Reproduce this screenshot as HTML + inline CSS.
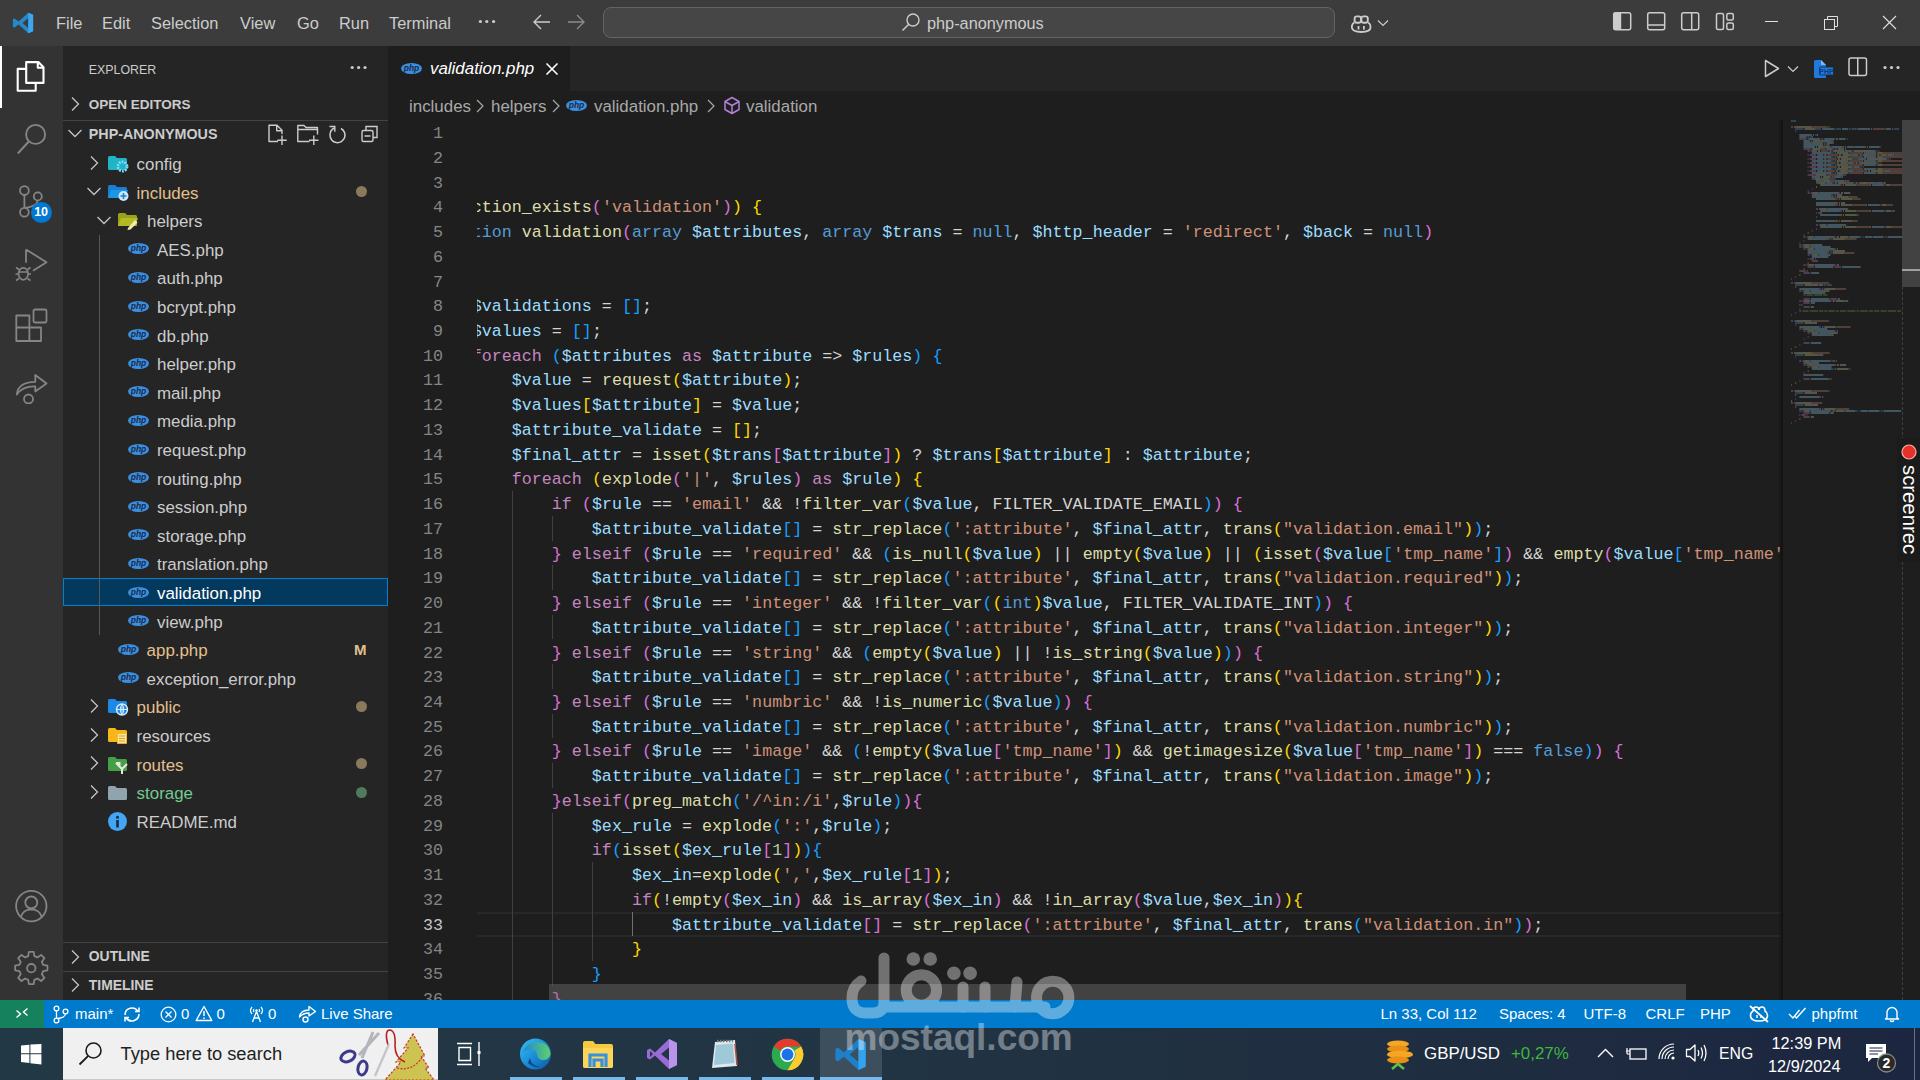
<!DOCTYPE html><html><head><meta charset="utf-8"><style>
*{margin:0;padding:0;box-sizing:border-box}
html,body{width:1920px;height:1080px;overflow:hidden;background:#1e1e1e;font-family:"Liberation Sans",sans-serif}
.abs{position:absolute}
#title{position:absolute;left:0;top:0;width:1920px;height:46px;background:#3c3c3c}
.menu{position:absolute;top:13px;font-size:16.4px;color:#cccccc;line-height:20px}
#act{position:absolute;left:0;top:46px;width:63px;height:954px;background:#333333}
#side{position:absolute;left:63px;top:46px;width:325px;height:954px;background:#252526}
#tabs{position:absolute;left:388px;top:46px;width:1532px;height:45px;background:#252526}
#editor{position:absolute;left:388px;top:91px;width:1532px;height:909px;background:#1e1e1e}
#status{position:absolute;left:0;top:1000px;width:1920px;height:28px;background:#007acc;color:#fff;font-size:15px}
#task{position:absolute;left:0;top:1028px;width:1920px;height:52px;background:linear-gradient(90deg,#233845 0%,#213444 45%,#1f2e40 72%,#1c2640 100%)}
.tree{position:absolute;font-size:16.9px;color:#cccccc;line-height:20px;white-space:pre}
.sec{position:absolute;font-size:13.9px;font-weight:bold;color:#cccccc;line-height:18px}
.ln{position:absolute;right:0;width:60px;text-align:right;color:#858585;height:24.735px;line-height:24.735px}
.ln.act{color:#c6c6c6}
#lnums{position:absolute;left:383px;top:122.1px;width:60px;height:880px;font-family:"Liberation Mono",monospace;font-size:16.69px}
#codeclip{position:absolute;left:476.7px;top:120.1px;width:1304px;height:880px;overflow:hidden}
.cl{position:absolute;left:-5px;margin-top:2px;white-space:pre;font-family:"Liberation Mono",monospace;font-size:16.69px;height:24.735px;line-height:24.735px;color:#d4d4d4}
.sb{position:absolute;top:5px;line-height:18px;white-space:pre}
.guide{position:absolute;width:1px;background:#404040}
</style></head><body><div id="title">
<svg class="abs" style="left:12px;top:12px" width="22" height="22" viewBox="0 0 100 100"><path d="M74 3 L96 13 V87 L74 97 L30 57 L12 71 L4 67 V33 L12 29 L30 43 Z M74 27 L48 50 L74 73Z" fill="#2489ca" fill-rule="evenodd"/><path d="M74 3 L96 13 V87 L74 97Z" fill="#3ea6ee"/></svg>
<div class="menu" style="left:56px">File</div>
<div class="menu" style="left:102px">Edit</div>
<div class="menu" style="left:151px">Selection</div>
<div class="menu" style="left:240px">View</div>
<div class="menu" style="left:297px">Go</div>
<div class="menu" style="left:339px">Run</div>
<div class="menu" style="left:389px">Terminal</div>
<svg class="abs" style="left:477px;top:18px" width="20" height="8"><circle cx="3.4" cy="3.5" r="1.6" fill="#cccccc"/><circle cx="9.8" cy="3.5" r="1.6" fill="#cccccc"/><circle cx="16.6" cy="3.5" r="1.6" fill="#cccccc"/></svg>
<svg class="abs" style="left:532px;top:13px" width="20" height="18" viewBox="0 0 20 18"><path d="M9 2 L2 9 L9 16 M2 9 H18" fill="none" stroke="#cccccc" stroke-width="1.4"/></svg>
<svg class="abs" style="left:566px;top:13px" width="20" height="18" viewBox="0 0 20 18"><path d="M11 2 L18 9 L11 16 M18 9 H2" fill="none" stroke="#8c8c8c" stroke-width="1.4"/></svg>
<div class="abs" style="left:603px;top:7px;width:732px;height:31px;background:#464646;border:1px solid #646464;border-radius:8px"></div>
<svg class="abs" style="left:900px;top:12px" width="22" height="20" viewBox="0 0 22 20"><circle cx="13" cy="8" r="6" fill="none" stroke="#cccccc" stroke-width="1.4"/><path d="M8.8 12.2 L2.5 18.5" stroke="#cccccc" stroke-width="1.5"/></svg>
<div class="menu" style="left:927px;font-size:16.3px">php-anonymous</div>
<svg class="abs" style="left:1351px;top:15px" width="21" height="18" viewBox="0 0 21 18"><path d="M3.2 7.5 Q0.8 9 0.8 12 Q0.8 17 10.2 17 Q19.6 17 19.6 12 Q19.6 9 17.2 7.5" fill="none" stroke="#cccccc" stroke-width="1.8"/><rect x="3.6" y="1.4" width="6.4" height="6.4" rx="2.2" fill="none" stroke="#cccccc" stroke-width="1.9"/><rect x="10.4" y="1.4" width="6.4" height="6.4" rx="2.2" fill="none" stroke="#cccccc" stroke-width="1.9"/><path d="M7.5 11 V14.5 M12.9 11 V14.5" stroke="#cccccc" stroke-width="1.8"/></svg>
<svg class="abs" style="left:1377px;top:19px" width="12" height="8" viewBox="0 0 12 8"><path d="M1 1.5 L6 6.5 L11 1.5" fill="none" stroke="#cccccc" stroke-width="1.2"/></svg>
<svg class="abs" style="left:1612px;top:11px" width="124" height="21" viewBox="0 0 124 21"><rect x="1.7" y="1.7" width="17" height="17" rx="2" fill="none" stroke="#cccccc" stroke-width="1.5"/><rect x="1.7" y="1.7" width="7.5" height="17" fill="#cccccc"/><rect x="35.7" y="1.7" width="17" height="17" rx="2" fill="none" stroke="#cccccc" stroke-width="1.5"/><path d="M35.7 14 H52.7" stroke="#cccccc" stroke-width="1.5"/><rect x="69.7" y="1.7" width="17" height="17" rx="2" fill="none" stroke="#cccccc" stroke-width="1.5"/><path d="M79.7 1.7 V18.7" stroke="#cccccc" stroke-width="1.5"/><rect x="104.5" y="2.5" width="7" height="16" rx="1.5" fill="none" stroke="#cccccc" stroke-width="1.5"/><rect x="114.8" y="2.5" width="6.5" height="6.5" rx="1.5" fill="none" stroke="#cccccc" stroke-width="1.5"/><rect x="114.8" y="12" width="6.5" height="6.5" rx="1.5" fill="none" stroke="#cccccc" stroke-width="1.5"/></svg>
<div class="abs" style="left:1765px;top:21px;width:13px;height:1px;background:#e0e0e0"></div>
<svg class="abs" style="left:1822px;top:14px" width="16" height="17" viewBox="0 0 16 17"><rect x="2.5" y="5.5" width="10" height="10" fill="none" stroke="#e0e0e0" stroke-width="1"/><path d="M5.5 5.5 V2.5 H15.5 V12.5 H12.5" fill="none" stroke="#e0e0e0" stroke-width="1"/></svg>
<svg class="abs" style="left:1882px;top:15px" width="15" height="15" viewBox="0 0 15 15"><path d="M1 1 L14 14 M14 1 L1 14" stroke="#e0e0e0" stroke-width="1.1"/></svg>
</div>
<div id="act">
<div class="abs" style="left:0;top:0;width:2px;height:62px;background:#ffffff"></div>
<svg class="abs" style="left:14px;top:12px" width="34" height="36" viewBox="0 0 34 36"><path d="M12.2 4.1 H24.3 L29.5 9.3 V24.9 H12.2Z M23.8 4.3 V9.8 H29.3" fill="none" stroke="#ffffff" stroke-width="2.1" stroke-linejoin="round"/><path d="M12.2 10.9 H3.7 V32.7 H21.7 V24.9" fill="none" stroke="#ffffff" stroke-width="2.1" stroke-linejoin="round"/></svg>
<svg class="abs" style="left:14px;top:76px" width="34" height="34" viewBox="0 0 34 34"><circle cx="21.6" cy="12.4" r="9.5" fill="none" stroke="#858585" stroke-width="1.9"/><path d="M14.8 19.5 L3.8 31.5" stroke="#858585" stroke-width="2"/></svg>
<svg class="abs" style="left:14px;top:136px" width="36" height="36" viewBox="0 0 36 36"><circle cx="10.4" cy="8.6" r="4.4" fill="none" stroke="#858585" stroke-width="1.8"/><circle cx="23.8" cy="14.4" r="4" fill="none" stroke="#858585" stroke-width="1.8"/><circle cx="10.4" cy="30.2" r="4.4" fill="none" stroke="#858585" stroke-width="1.8"/><path d="M10.4 13 V25.8 M23.8 18.4 Q23 24 11.5 26" fill="none" stroke="#858585" stroke-width="1.8"/></svg>
<div class="abs" style="left:30.6px;top:155.7px;width:21px;height:21px;border-radius:50%;background:#0078d4;color:#fff;font-size:12.5px;font-weight:bold;text-align:center;line-height:21px">10</div>
<svg class="abs" style="left:14px;top:202px" width="36" height="36" viewBox="0 0 36 36"><path d="M12 1.5 L32.5 14.2 L19 22.8 M12 1.5 V14.8" fill="none" stroke="#858585" stroke-width="1.8" stroke-linejoin="round"/><ellipse cx="9.3" cy="25.8" rx="4.8" ry="6" fill="none" stroke="#858585" stroke-width="1.7"/><path d="M4.5 24 H14 M2 19.5 L5 21.5 M16.5 19.5 L13.5 21.5 M1.5 26 H4.5 M14 26 H17 M2 32.5 L5 30.5 M16.5 32.5 L13.5 30.5" stroke="#858585" stroke-width="1.6"/></svg>
<svg class="abs" style="left:14px;top:262px" width="36" height="36" viewBox="0 0 36 36"><path d="M2.3 7.5 H15.4 V33 H2.3Z M2.3 19.5 H27 V33 H15.4" fill="none" stroke="#858585" stroke-width="1.8" stroke-linejoin="round"/><rect x="19.5" y="1.5" width="13" height="13" rx="1.5" fill="none" stroke="#858585" stroke-width="1.8"/></svg>
<svg class="abs" style="left:14px;top:322px" width="36" height="36" viewBox="0 0 36 36"><path d="M2.8 26.5 Q4 14 21.3 13.8 V7 L32.5 15.5 L21.3 23.5 V18.5 Q9 18 2.8 26.5Z" fill="none" stroke="#858585" stroke-width="1.8" stroke-linejoin="round"/><circle cx="14.5" cy="31" r="4.5" fill="none" stroke="#858585" stroke-width="1.8"/></svg>
<svg class="abs" style="left:14px;top:842px" width="36" height="36" viewBox="0 0 36 36"><circle cx="17.3" cy="18.1" r="15.2" fill="none" stroke="#858585" stroke-width="1.8"/><circle cx="17.3" cy="14.5" r="6" fill="none" stroke="#858585" stroke-width="1.8"/><path d="M6.8 29 Q9 21.5 17.3 21.3 Q25.6 21.5 27.8 29" fill="none" stroke="#858585" stroke-width="1.8"/></svg>
<svg class="abs" style="left:14px;top:904px" width="36" height="36" viewBox="0 0 36 36"><path d="M14.8 2.5 H19.8 L20.6 7 L23.8 8.4 L27.6 5.7 L31.1 9.2 L28.4 13 L29.8 16.2 L34.3 17 V22 L29.8 22.8 L28.4 26 L31.1 29.8 L27.6 33.3 L23.8 30.6 L20.6 32 L19.8 36.5 H14.8 L14 32 L10.8 30.6 L7 33.3 L3.5 29.8 L6.2 26 L4.8 22.8 L0.3 22 V17 L4.8 16.2 L6.2 13 L3.5 9.2 L7 5.7 L10.8 8.4 L14 7Z" transform="translate(0,-1.5) scale(0.95) translate(0.9,1)" fill="none" stroke="#858585" stroke-width="1.9" stroke-linejoin="round"/><circle cx="17.3" cy="18.2" r="4.2" fill="none" stroke="#858585" stroke-width="1.8"/></svg>
</div>
<div id="side">
<div class="abs" style="left:25.8px;top:15px;font-size:12.4px;color:#cccccc;line-height:18px">EXPLORER</div>
<svg class="abs" style="left:286px;top:18px" width="20" height="8"><circle cx="3.2" cy="3.5" r="1.6" fill="#cccccc"/><circle cx="9.6" cy="3.5" r="1.6" fill="#cccccc"/><circle cx="16" cy="3.5" r="1.6" fill="#cccccc"/></svg>
<svg class="abs" style="left:5.5px;top:50.0px" width="12" height="16" viewBox="0 0 12 16"><path d="M3 1.5 L9.5 8 L3 14.5" fill="none" stroke="#c5c5c5" stroke-width="1.3"/></svg>
<div class="sec" style="left:25.8px;top:50px;font-size:13.5px">OPEN EDITORS</div>
<div class="abs" style="left:0;top:74px;width:325px;height:1px;background:#434343"></div>
<svg class="abs" style="left:3.5px;top:80.5px" width="16" height="12" viewBox="0 0 16 12"><path d="M1.5 3 L8 9.5 L14.5 3" fill="none" stroke="#c5c5c5" stroke-width="1.3"/></svg>
<div class="sec" style="left:25.8px;top:79px;font-size:14.3px">PHP-ANONYMOUS</div>
<svg class="abs" style="left:204px;top:78px" width="120" height="22" viewBox="0 0 120 22"><path d="M11 17.5 H2 V1.2 H10 L15 6.2 V10 M9.7 1.5 V6.8 H15" fill="none" stroke="#cccccc" stroke-width="1.4" stroke-linejoin="round"/><path d="M15 11.5 V21 M10.3 16.2 H19.7" stroke="#cccccc" stroke-width="1.4"/><path d="M42.5 17.5 H30.8 V1.5 H37 L39 3.5 H50.5 V10.5 M30.8 5.5 H50.5" fill="none" stroke="#cccccc" stroke-width="1.4" stroke-linejoin="round"/><path d="M46.8 11.5 V21 M42 16.2 H51.5" stroke="#cccccc" stroke-width="1.4"/><path d="M67.5 4 Q63 6 63 11 A7.5 7.5 0 1 0 74 4.5" fill="none" stroke="#cccccc" stroke-width="1.5"/><path d="M62.5 2.5 H67.8 V7.8" fill="none" stroke="#cccccc" stroke-width="1.4"/><rect x="95" y="6.5" width="11" height="11" rx="1.5" fill="none" stroke="#cccccc" stroke-width="1.4"/><path d="M99 6.5 V2.5 H110 V13.5 H106 M97.5 12 H103.5" fill="none" stroke="#cccccc" stroke-width="1.4"/></svg>
<div class="abs" style="left:0;top:531.6px;width:325px;height:28.6px;background:#04395e;border:1px solid #007fd4"></div>
<div class="abs" style="left:36px;top:188.8px;width:1px;height:400.4px;background:#585858"></div>
<svg class="abs" style="left:24.5px;top:108.5px" width="12" height="16" viewBox="0 0 12 16"><path d="M3 1.5 L9.5 8 L3 14.5" fill="none" stroke="#c5c5c5" stroke-width="1.3"/></svg>
<svg class="abs" style="left:45.0px;top:109.5px" width="21" height="17" viewBox="0 0 21 17"><path d="M0 1.5 Q0 0 1.5 0 H7 L9 2 H17.5 Q19 2 19 3.5 V12.5 Q19 14 17.5 14 H1.5 Q0 14 0 12.5Z" fill="#20b5c4"/><circle cx="14.5" cy="10.5" r="4.6" fill="none" stroke="#86dcfa" stroke-width="2.6" stroke-dasharray="1.8 1.1"/><circle cx="14.5" cy="10.5" r="2" fill="#20b5c4"/></svg>
<div class="tree" style="left:73.6px;top:109.0px;color:#cccccc">config</div>
<svg class="abs" style="left:23.0px;top:139.1px" width="16" height="12" viewBox="0 0 16 12"><path d="M1.5 3 L8 9.5 L14.5 3" fill="none" stroke="#c5c5c5" stroke-width="1.3"/></svg>
<svg class="abs" style="left:45.0px;top:139.1px" width="21" height="17" viewBox="0 0 21 17"><path d="M0 1.5 Q0 0 1.5 0 H7 L9 2 H17.5 Q19 2 19 3.5 V13 H0Z" fill="#1a7fd0"/><path d="M3 5 H20 L17 13 H0Z" fill="#1e96e8"/><circle cx="15.5" cy="11" r="5" fill="#cde9fb"/><path d="M15.5 8 V14 M12.5 11 H18.5" stroke="#1a7fd0" stroke-width="1.6"/></svg>
<div class="tree" style="left:73.6px;top:137.6px;color:#e2c08d">includes</div>
<svg class="abs" style="left:33.4px;top:167.7px" width="16" height="12" viewBox="0 0 16 12"><path d="M1.5 3 L8 9.5 L14.5 3" fill="none" stroke="#c5c5c5" stroke-width="1.3"/></svg>
<svg class="abs" style="left:55.4px;top:167.2px" width="21" height="17" viewBox="0 0 21 17"><path d="M0 1.5 Q0 0 1.5 0 H7 L9 2 H17.5 Q19 2 19 3.5 V13 H0Z" fill="#9aa21c"/><path d="M3 5 H20 L17 13 H0Z" fill="#b3bb24"/><path d="M10 15 L17 7 L19.5 9.5 L12.5 16.5 L9.5 17Z" fill="#f3ecb0"/></svg>
<div class="tree" style="left:84.0px;top:166.2px;color:#cccccc">helpers</div>
<svg class="abs" style="left:65.0px;top:197.4px" width="21" height="11" viewBox="0 0 21 11"><ellipse cx="10.5" cy="5.5" rx="10.5" ry="5.5" fill="#3b8fdf"/><text x="10.5" y="8.3" text-anchor="middle" font-family="Liberation Sans" font-weight="bold" font-style="italic" font-size="8.5" fill="#1b2a4a">php</text></svg>
<div class="tree" style="left:94.0px;top:194.8px;color:#cccccc">AES.php</div>
<svg class="abs" style="left:65.0px;top:226.0px" width="21" height="11" viewBox="0 0 21 11"><ellipse cx="10.5" cy="5.5" rx="10.5" ry="5.5" fill="#3b8fdf"/><text x="10.5" y="8.3" text-anchor="middle" font-family="Liberation Sans" font-weight="bold" font-style="italic" font-size="8.5" fill="#1b2a4a">php</text></svg>
<div class="tree" style="left:94.0px;top:223.4px;color:#cccccc">auth.php</div>
<svg class="abs" style="left:65.0px;top:254.6px" width="21" height="11" viewBox="0 0 21 11"><ellipse cx="10.5" cy="5.5" rx="10.5" ry="5.5" fill="#3b8fdf"/><text x="10.5" y="8.3" text-anchor="middle" font-family="Liberation Sans" font-weight="bold" font-style="italic" font-size="8.5" fill="#1b2a4a">php</text></svg>
<div class="tree" style="left:94.0px;top:252.0px;color:#cccccc">bcrypt.php</div>
<svg class="abs" style="left:65.0px;top:283.2px" width="21" height="11" viewBox="0 0 21 11"><ellipse cx="10.5" cy="5.5" rx="10.5" ry="5.5" fill="#3b8fdf"/><text x="10.5" y="8.3" text-anchor="middle" font-family="Liberation Sans" font-weight="bold" font-style="italic" font-size="8.5" fill="#1b2a4a">php</text></svg>
<div class="tree" style="left:94.0px;top:280.6px;color:#cccccc">db.php</div>
<svg class="abs" style="left:65.0px;top:311.8px" width="21" height="11" viewBox="0 0 21 11"><ellipse cx="10.5" cy="5.5" rx="10.5" ry="5.5" fill="#3b8fdf"/><text x="10.5" y="8.3" text-anchor="middle" font-family="Liberation Sans" font-weight="bold" font-style="italic" font-size="8.5" fill="#1b2a4a">php</text></svg>
<div class="tree" style="left:94.0px;top:309.2px;color:#cccccc">helper.php</div>
<svg class="abs" style="left:65.0px;top:340.4px" width="21" height="11" viewBox="0 0 21 11"><ellipse cx="10.5" cy="5.5" rx="10.5" ry="5.5" fill="#3b8fdf"/><text x="10.5" y="8.3" text-anchor="middle" font-family="Liberation Sans" font-weight="bold" font-style="italic" font-size="8.5" fill="#1b2a4a">php</text></svg>
<div class="tree" style="left:94.0px;top:337.8px;color:#cccccc">mail.php</div>
<svg class="abs" style="left:65.0px;top:369.0px" width="21" height="11" viewBox="0 0 21 11"><ellipse cx="10.5" cy="5.5" rx="10.5" ry="5.5" fill="#3b8fdf"/><text x="10.5" y="8.3" text-anchor="middle" font-family="Liberation Sans" font-weight="bold" font-style="italic" font-size="8.5" fill="#1b2a4a">php</text></svg>
<div class="tree" style="left:94.0px;top:366.4px;color:#cccccc">media.php</div>
<svg class="abs" style="left:65.0px;top:397.6px" width="21" height="11" viewBox="0 0 21 11"><ellipse cx="10.5" cy="5.5" rx="10.5" ry="5.5" fill="#3b8fdf"/><text x="10.5" y="8.3" text-anchor="middle" font-family="Liberation Sans" font-weight="bold" font-style="italic" font-size="8.5" fill="#1b2a4a">php</text></svg>
<div class="tree" style="left:94.0px;top:395.0px;color:#cccccc">request.php</div>
<svg class="abs" style="left:65.0px;top:426.2px" width="21" height="11" viewBox="0 0 21 11"><ellipse cx="10.5" cy="5.5" rx="10.5" ry="5.5" fill="#3b8fdf"/><text x="10.5" y="8.3" text-anchor="middle" font-family="Liberation Sans" font-weight="bold" font-style="italic" font-size="8.5" fill="#1b2a4a">php</text></svg>
<div class="tree" style="left:94.0px;top:423.6px;color:#cccccc">routing.php</div>
<svg class="abs" style="left:65.0px;top:454.8px" width="21" height="11" viewBox="0 0 21 11"><ellipse cx="10.5" cy="5.5" rx="10.5" ry="5.5" fill="#3b8fdf"/><text x="10.5" y="8.3" text-anchor="middle" font-family="Liberation Sans" font-weight="bold" font-style="italic" font-size="8.5" fill="#1b2a4a">php</text></svg>
<div class="tree" style="left:94.0px;top:452.2px;color:#cccccc">session.php</div>
<svg class="abs" style="left:65.0px;top:483.4px" width="21" height="11" viewBox="0 0 21 11"><ellipse cx="10.5" cy="5.5" rx="10.5" ry="5.5" fill="#3b8fdf"/><text x="10.5" y="8.3" text-anchor="middle" font-family="Liberation Sans" font-weight="bold" font-style="italic" font-size="8.5" fill="#1b2a4a">php</text></svg>
<div class="tree" style="left:94.0px;top:480.8px;color:#cccccc">storage.php</div>
<svg class="abs" style="left:65.0px;top:512.0px" width="21" height="11" viewBox="0 0 21 11"><ellipse cx="10.5" cy="5.5" rx="10.5" ry="5.5" fill="#3b8fdf"/><text x="10.5" y="8.3" text-anchor="middle" font-family="Liberation Sans" font-weight="bold" font-style="italic" font-size="8.5" fill="#1b2a4a">php</text></svg>
<div class="tree" style="left:94.0px;top:509.4px;color:#cccccc">translation.php</div>
<svg class="abs" style="left:65.0px;top:540.6px" width="21" height="11" viewBox="0 0 21 11"><ellipse cx="10.5" cy="5.5" rx="10.5" ry="5.5" fill="#3b8fdf"/><text x="10.5" y="8.3" text-anchor="middle" font-family="Liberation Sans" font-weight="bold" font-style="italic" font-size="8.5" fill="#1b2a4a">php</text></svg>
<div class="tree" style="left:94.0px;top:538.0px;color:#ffffff">validation.php</div>
<svg class="abs" style="left:65.0px;top:569.2px" width="21" height="11" viewBox="0 0 21 11"><ellipse cx="10.5" cy="5.5" rx="10.5" ry="5.5" fill="#3b8fdf"/><text x="10.5" y="8.3" text-anchor="middle" font-family="Liberation Sans" font-weight="bold" font-style="italic" font-size="8.5" fill="#1b2a4a">php</text></svg>
<div class="tree" style="left:94.0px;top:566.6px;color:#cccccc">view.php</div>
<svg class="abs" style="left:54.8px;top:597.8px" width="21" height="11" viewBox="0 0 21 11"><ellipse cx="10.5" cy="5.5" rx="10.5" ry="5.5" fill="#3b8fdf"/><text x="10.5" y="8.3" text-anchor="middle" font-family="Liberation Sans" font-weight="bold" font-style="italic" font-size="8.5" fill="#1b2a4a">php</text></svg>
<div class="tree" style="left:83.6px;top:595.2px;color:#e2c08d">app.php</div>
<svg class="abs" style="left:54.8px;top:626.4px" width="21" height="11" viewBox="0 0 21 11"><ellipse cx="10.5" cy="5.5" rx="10.5" ry="5.5" fill="#3b8fdf"/><text x="10.5" y="8.3" text-anchor="middle" font-family="Liberation Sans" font-weight="bold" font-style="italic" font-size="8.5" fill="#1b2a4a">php</text></svg>
<div class="tree" style="left:83.6px;top:623.8px;color:#cccccc">exception_error.php</div>
<svg class="abs" style="left:24.5px;top:651.9px" width="12" height="16" viewBox="0 0 12 16"><path d="M3 1.5 L9.5 8 L3 14.5" fill="none" stroke="#c5c5c5" stroke-width="1.3"/></svg>
<svg class="abs" style="left:45.0px;top:653.4px" width="21" height="17" viewBox="0 0 21 17"><path d="M0 1.5 Q0 0 1.5 0 H7 L9 2 H17.5 Q19 2 19 3.5 V12.5 Q19 14 17.5 14 H1.5 Q0 14 0 12.5Z" fill="#1e88e5"/><circle cx="14" cy="10.5" r="5.5" fill="#1e88e5" stroke="#d6eefc" stroke-width="1.4"/><path d="M8.5 10.5 H19.5 M14 5 V16 M14 5 Q10.5 10.5 14 16 Q17.5 10.5 14 5" fill="none" stroke="#d6eefc" stroke-width="1"/></svg>
<div class="tree" style="left:73.6px;top:652.4px;color:#e2c08d">public</div>
<svg class="abs" style="left:24.5px;top:680.5px" width="12" height="16" viewBox="0 0 12 16"><path d="M3 1.5 L9.5 8 L3 14.5" fill="none" stroke="#c5c5c5" stroke-width="1.3"/></svg>
<svg class="abs" style="left:45.0px;top:682.0px" width="21" height="17" viewBox="0 0 21 17"><path d="M0 1.5 Q0 0 1.5 0 H7 L9 2 H17.5 Q19 2 19 3.5 V12.5 Q19 14 17.5 14 H1.5 Q0 14 0 12.5Z" fill="#f7b718"/><rect x="9.5" y="5.5" width="9" height="10" fill="#fbe6a8" stroke="#f7b718" stroke-width="0.8"/><path d="M11 8 H17 M11 10.5 H17 M11 13 H17" stroke="#e0a010" stroke-width="1"/></svg>
<div class="tree" style="left:73.6px;top:681.0px;color:#cccccc">resources</div>
<svg class="abs" style="left:24.5px;top:709.1px" width="12" height="16" viewBox="0 0 12 16"><path d="M3 1.5 L9.5 8 L3 14.5" fill="none" stroke="#c5c5c5" stroke-width="1.3"/></svg>
<svg class="abs" style="left:45.0px;top:710.6px" width="21" height="17" viewBox="0 0 21 17"><path d="M0 1.5 Q0 0 1.5 0 H7 L9 2 H17.5 Q19 2 19 3.5 V12.5 Q19 14 17.5 14 H1.5 Q0 14 0 12.5Z" fill="#43a047"/><path d="M8 6 L11.5 6 L11.5 9.5 M8 6 L14 12 V17 M14 12 L19 7" fill="none" stroke="#e8e8d8" stroke-width="2"/></svg>
<div class="tree" style="left:73.6px;top:709.6px;color:#e2c08d">routes</div>
<svg class="abs" style="left:24.5px;top:737.7px" width="12" height="16" viewBox="0 0 12 16"><path d="M3 1.5 L9.5 8 L3 14.5" fill="none" stroke="#c5c5c5" stroke-width="1.3"/></svg>
<svg class="abs" style="left:45.0px;top:739.7px" width="21" height="17" viewBox="0 0 21 17"><path d="M0 1.5 Q0 0 1.5 0 H7 L9 2 H17.5 Q19 2 19 3.5 V12.5 Q19 14 17.5 14 H1.5 Q0 14 0 12.5Z" fill="#90a4ae"/></svg>
<div class="tree" style="left:73.6px;top:738.2px;color:#73c991">storage</div>
<svg class="abs" style="left:45.0px;top:766.4px" width="20" height="20" viewBox="0 0 20 20"><circle cx="9.5" cy="9.5" r="9.5" fill="#42a5f5"/><rect x="8.2" y="8" width="2.6" height="7.5" fill="#1c2a40"/><circle cx="9.5" cy="5.2" r="1.5" fill="#1c2a40"/></svg>
<div class="tree" style="left:73.6px;top:766.8px;color:#cccccc">README.md</div>
<div class="abs" style="left:292.7px;top:139.9px;width:11px;height:11px;border-radius:50%;background:#8a7a5c"></div>
<div class="abs" style="left:292.7px;top:654.7px;width:11px;height:11px;border-radius:50%;background:#8a7a5c"></div>
<div class="abs" style="left:292.7px;top:711.9px;width:11px;height:11px;border-radius:50%;background:#8a7a5c"></div>
<div class="abs" style="left:292.7px;top:740.5px;width:11px;height:11px;border-radius:50%;background:#4f7a5e"></div>
<div class="abs" style="left:291px;top:594.7px;font-size:15px;font-weight:bold;color:#e2c08d;line-height:18px">M</div>
<div class="abs" style="left:0;top:896.4px;width:325px;height:1px;background:#434343"></div>
<svg class="abs" style="left:5.5px;top:902.5px" width="12" height="16" viewBox="0 0 12 16"><path d="M3 1.5 L9.5 8 L3 14.5" fill="none" stroke="#c5c5c5" stroke-width="1.3"/></svg>
<div class="sec" style="left:25.8px;top:901px">OUTLINE</div>
<div class="abs" style="left:0;top:925px;width:325px;height:1px;background:#434343"></div>
<svg class="abs" style="left:5.5px;top:931.0px" width="12" height="16" viewBox="0 0 12 16"><path d="M3 1.5 L9.5 8 L3 14.5" fill="none" stroke="#c5c5c5" stroke-width="1.3"/></svg>
<div class="sec" style="left:25.8px;top:930px">TIMELINE</div>
</div>
<div id="tabs">
<div class="abs" style="left:0;top:0;width:182px;height:45px;background:#1e1e1e"></div>
<svg class="abs" style="left:13.0px;top:17.0px" width="21" height="11" viewBox="0 0 21 11"><ellipse cx="10.5" cy="5.5" rx="10.5" ry="5.5" fill="#3b8fdf"/><text x="10.5" y="8.3" text-anchor="middle" font-family="Liberation Sans" font-weight="bold" font-style="italic" font-size="8.5" fill="#1b2a4a">php</text></svg>
<div class="abs" style="left:42px;top:13px;font-size:16.9px;font-style:italic;color:#ffffff;line-height:20px">validation.php</div>
<svg class="abs" style="left:157px;top:16px" width="14" height="14" viewBox="0 0 14 14"><path d="M1.5 1.5 L12.5 12.5 M12.5 1.5 L1.5 12.5" stroke="#ffffff" stroke-width="1.6"/></svg>
<svg class="abs" style="left:1376px;top:13px" width="16" height="19" viewBox="0 0 16 19"><path d="M1.5 1.5 L14.5 9.5 L1.5 17.5Z" fill="none" stroke="#cccccc" stroke-width="1.5" stroke-linejoin="round"/></svg>
<svg class="abs" style="left:1399px;top:19px" width="12" height="8" viewBox="0 0 12 8"><path d="M1 1.5 L6 6.5 L11 1.5" fill="none" stroke="#cccccc" stroke-width="1.2"/></svg>
<svg class="abs" style="left:1426px;top:14px" width="20" height="19" viewBox="0 0 20 19"><path d="M0 1.5 Q0 0 1.5 0 H7 L12 5 V18 H1.5 Q0 18 0 16.5Z" fill="#1f7ae0"/><path d="M7 0 V5 H12" fill="#86b8f0"/><rect x="5.5" y="7" width="14" height="8" rx="1" fill="#1f7ae0" stroke="#252526" stroke-width="0.8"/><text x="12.5" y="13.5" text-anchor="middle" font-family="Liberation Sans" font-size="7" font-weight="bold" fill="#0d3a78">PHP</text></svg>
<svg class="abs" style="left:1460px;top:11px" width="20" height="20" viewBox="0 0 20 20"><rect x="1" y="1" width="17.5" height="17.5" rx="2" fill="none" stroke="#cccccc" stroke-width="1.5"/><path d="M9.75 1 V18.5" stroke="#cccccc" stroke-width="1.5"/></svg>
<svg class="abs" style="left:1494px;top:18px" width="20" height="8"><circle cx="3" cy="3.5" r="1.6" fill="#cccccc"/><circle cx="9.5" cy="3.5" r="1.6" fill="#cccccc"/><circle cx="16" cy="3.5" r="1.6" fill="#cccccc"/></svg>
</div>
<div id="editor">
<div class="abs" style="left:21px;top:6px;font-size:16.9px;color:#a9a9a9;line-height:20px;white-space:pre">includes</div>
<svg class="abs" style="left:87px;top:7px" width="10" height="16" viewBox="0 0 10 16"><path d="M2 2 L8 8 L2 14" fill="none" stroke="#a9a9a9" stroke-width="1.2"/></svg>
<div class="abs" style="left:103px;top:6px;font-size:16.9px;color:#a9a9a9;line-height:20px">helpers</div>
<svg class="abs" style="left:163px;top:7px" width="10" height="16" viewBox="0 0 10 16"><path d="M2 2 L8 8 L2 14" fill="none" stroke="#a9a9a9" stroke-width="1.2"/></svg>
<svg class="abs" style="left:178.0px;top:9.0px" width="21" height="11" viewBox="0 0 21 11"><ellipse cx="10.5" cy="5.5" rx="10.5" ry="5.5" fill="#3b8fdf"/><text x="10.5" y="8.3" text-anchor="middle" font-family="Liberation Sans" font-weight="bold" font-style="italic" font-size="8.5" fill="#1b2a4a">php</text></svg>
<div class="abs" style="left:206px;top:6px;font-size:16.9px;color:#a9a9a9;line-height:20px">validation.php</div>
<svg class="abs" style="left:318px;top:7px" width="10" height="16" viewBox="0 0 10 16"><path d="M2 2 L8 8 L2 14" fill="none" stroke="#a9a9a9" stroke-width="1.2"/></svg>
<svg class="abs" style="left:335px;top:5px" width="18" height="20" viewBox="0 0 18 20"><path d="M9 1.5 L16 5.5 V13.5 L9 17.5 L2 13.5 V5.5Z M2 5.5 L9 9.5 L16 5.5 M9 9.5 V17.5" fill="none" stroke="#b180d7" stroke-width="1.5" stroke-linejoin="round"/></svg>
<div class="abs" style="left:358px;top:6px;font-size:16.9px;color:#a9a9a9;line-height:20px">validation</div>
</div>
<div id="lnums"><div class="ln" style="top:0.00px">1</div><div class="ln" style="top:24.73px">2</div><div class="ln" style="top:49.47px">3</div><div class="ln" style="top:74.20px">4</div><div class="ln" style="top:98.94px">5</div><div class="ln" style="top:123.67px">6</div><div class="ln" style="top:148.41px">7</div><div class="ln" style="top:173.14px">8</div><div class="ln" style="top:197.88px">9</div><div class="ln" style="top:222.62px">10</div><div class="ln" style="top:247.35px">11</div><div class="ln" style="top:272.08px">12</div><div class="ln" style="top:296.82px">13</div><div class="ln" style="top:321.56px">14</div><div class="ln" style="top:346.29px">15</div><div class="ln" style="top:371.02px">16</div><div class="ln" style="top:395.76px">17</div><div class="ln" style="top:420.50px">18</div><div class="ln" style="top:445.23px">19</div><div class="ln" style="top:469.96px">20</div><div class="ln" style="top:494.70px">21</div><div class="ln" style="top:519.43px">22</div><div class="ln" style="top:544.17px">23</div><div class="ln" style="top:568.90px">24</div><div class="ln" style="top:593.64px">25</div><div class="ln" style="top:618.38px">26</div><div class="ln" style="top:643.11px">27</div><div class="ln" style="top:667.85px">28</div><div class="ln" style="top:692.58px">29</div><div class="ln" style="top:717.31px">30</div><div class="ln" style="top:742.05px">31</div><div class="ln" style="top:766.78px">32</div><div class="ln act" style="top:791.52px">33</div><div class="ln" style="top:816.25px">34</div><div class="ln" style="top:840.99px">35</div><div class="ln" style="top:865.73px">36</div></div>
<div class="abs" style="left:476.7px;top:912.2px;width:1304px;height:24.7px;border-top:2px solid #282828;border-bottom:2px solid #282828"></div>
<div class="abs" style="left:0;top:0;width:1920px;height:1000px;overflow:hidden">
<div class="guide" style="left:512.2px;top:491.1px;height:519.4px"></div>
<div class="guide" style="left:552.2px;top:515.9px;height:24.7px"></div>
<div class="guide" style="left:552.2px;top:565.3px;height:24.7px"></div>
<div class="guide" style="left:552.2px;top:614.8px;height:24.7px"></div>
<div class="guide" style="left:552.2px;top:664.3px;height:24.7px"></div>
<div class="guide" style="left:552.2px;top:713.7px;height:24.7px"></div>
<div class="guide" style="left:552.2px;top:763.2px;height:24.7px"></div>
<div class="guide" style="left:552.2px;top:812.7px;height:173.1px"></div>
<div class="guide" style="left:592.2px;top:862.1px;height:98.9px"></div>
<div class="guide" style="left:632.4px;top:911.6px;height:24.7px;background:#707070"></div>
</div>
<div id="codeclip"><div class="cl" style="top:0.00px"></div>
<div class="cl" style="top:24.73px"></div>
<div class="cl" style="top:49.47px"></div>
<div class="cl" style="top:74.20px"><span style="color:#dcdcaa">ction_exists</span><span style="color:#da70d6">(</span><span style="color:#ce9178">&#x27;validation&#x27;</span><span style="color:#da70d6">)</span><span style="color:#ffd700">)</span><span style="color:#d4d4d4"> </span><span style="color:#ffd700">{</span></div>
<div class="cl" style="top:98.94px"><span style="color:#569cd6">tion</span><span style="color:#d4d4d4"> </span><span style="color:#dcdcaa">validation</span><span style="color:#da70d6">(</span><span style="color:#569cd6">array</span><span style="color:#d4d4d4"> </span><span style="color:#9cdcfe">$attributes</span><span style="color:#d4d4d4">, </span><span style="color:#569cd6">array</span><span style="color:#d4d4d4"> </span><span style="color:#9cdcfe">$trans</span><span style="color:#d4d4d4"> = </span><span style="color:#569cd6">null</span><span style="color:#d4d4d4">, </span><span style="color:#9cdcfe">$http_header</span><span style="color:#d4d4d4"> = </span><span style="color:#ce9178">&#x27;redirect&#x27;</span><span style="color:#d4d4d4">, </span><span style="color:#9cdcfe">$back</span><span style="color:#d4d4d4"> = </span><span style="color:#569cd6">null</span><span style="color:#da70d6">)</span></div>
<div class="cl" style="top:123.67px"></div>
<div class="cl" style="top:148.41px"></div>
<div class="cl" style="top:173.14px"><span style="color:#9cdcfe">$validations</span><span style="color:#d4d4d4"> = </span><span style="color:#179fff">[]</span><span style="color:#d4d4d4">;</span></div>
<div class="cl" style="top:197.88px"><span style="color:#9cdcfe">$values</span><span style="color:#d4d4d4"> = </span><span style="color:#179fff">[]</span><span style="color:#d4d4d4">;</span></div>
<div class="cl" style="top:222.62px"><span style="color:#c586c0">foreach</span><span style="color:#d4d4d4"> </span><span style="color:#179fff">(</span><span style="color:#9cdcfe">$attributes</span><span style="color:#d4d4d4"> </span><span style="color:#c586c0">as</span><span style="color:#d4d4d4"> </span><span style="color:#9cdcfe">$attribute</span><span style="color:#d4d4d4"> =&gt; </span><span style="color:#9cdcfe">$rules</span><span style="color:#179fff">)</span><span style="color:#d4d4d4"> </span><span style="color:#179fff">{</span></div>
<div class="cl" style="top:247.35px"><span style="color:#d4d4d4">    </span><span style="color:#9cdcfe">$value</span><span style="color:#d4d4d4"> = </span><span style="color:#dcdcaa">request</span><span style="color:#ffd700">(</span><span style="color:#9cdcfe">$attribute</span><span style="color:#ffd700">)</span><span style="color:#d4d4d4">;</span></div>
<div class="cl" style="top:272.08px"><span style="color:#d4d4d4">    </span><span style="color:#9cdcfe">$values</span><span style="color:#ffd700">[</span><span style="color:#9cdcfe">$attribute</span><span style="color:#ffd700">]</span><span style="color:#d4d4d4"> = </span><span style="color:#9cdcfe">$value</span><span style="color:#d4d4d4">;</span></div>
<div class="cl" style="top:296.82px"><span style="color:#d4d4d4">    </span><span style="color:#9cdcfe">$attribute_validate</span><span style="color:#d4d4d4"> = </span><span style="color:#ffd700">[]</span><span style="color:#d4d4d4">;</span></div>
<div class="cl" style="top:321.56px"><span style="color:#d4d4d4">    </span><span style="color:#9cdcfe">$final_attr</span><span style="color:#d4d4d4"> = </span><span style="color:#dcdcaa">isset</span><span style="color:#ffd700">(</span><span style="color:#9cdcfe">$trans</span><span style="color:#da70d6">[</span><span style="color:#9cdcfe">$attribute</span><span style="color:#da70d6">]</span><span style="color:#ffd700">)</span><span style="color:#d4d4d4"> ? </span><span style="color:#9cdcfe">$trans</span><span style="color:#ffd700">[</span><span style="color:#9cdcfe">$attribute</span><span style="color:#ffd700">]</span><span style="color:#d4d4d4"> : </span><span style="color:#9cdcfe">$attribute</span><span style="color:#d4d4d4">;</span></div>
<div class="cl" style="top:346.29px"><span style="color:#d4d4d4">    </span><span style="color:#c586c0">foreach</span><span style="color:#d4d4d4"> </span><span style="color:#ffd700">(</span><span style="color:#dcdcaa">explode</span><span style="color:#da70d6">(</span><span style="color:#ce9178">&#x27;|&#x27;</span><span style="color:#d4d4d4">, </span><span style="color:#9cdcfe">$rules</span><span style="color:#da70d6">)</span><span style="color:#d4d4d4"> </span><span style="color:#c586c0">as</span><span style="color:#d4d4d4"> </span><span style="color:#9cdcfe">$rule</span><span style="color:#ffd700">)</span><span style="color:#d4d4d4"> </span><span style="color:#ffd700">{</span></div>
<div class="cl" style="top:371.02px"><span style="color:#d4d4d4">        </span><span style="color:#c586c0">if</span><span style="color:#d4d4d4"> </span><span style="color:#da70d6">(</span><span style="color:#9cdcfe">$rule</span><span style="color:#d4d4d4"> == </span><span style="color:#ce9178">&#x27;email&#x27;</span><span style="color:#d4d4d4"> &amp;&amp; !</span><span style="color:#dcdcaa">filter_var</span><span style="color:#179fff">(</span><span style="color:#9cdcfe">$value</span><span style="color:#d4d4d4">, FILTER_VALIDATE_EMAIL</span><span style="color:#179fff">)</span><span style="color:#da70d6">)</span><span style="color:#d4d4d4"> </span><span style="color:#da70d6">{</span></div>
<div class="cl" style="top:395.76px"><span style="color:#d4d4d4">            </span><span style="color:#9cdcfe">$attribute_validate</span><span style="color:#179fff">[]</span><span style="color:#d4d4d4"> = </span><span style="color:#dcdcaa">str_replace</span><span style="color:#179fff">(</span><span style="color:#ce9178">&#x27;:attribute&#x27;</span><span style="color:#d4d4d4">, </span><span style="color:#9cdcfe">$final_attr</span><span style="color:#d4d4d4">, </span><span style="color:#dcdcaa">trans</span><span style="color:#ffd700">(</span><span style="color:#ce9178">&quot;validation.email&quot;</span><span style="color:#ffd700">)</span><span style="color:#179fff">)</span><span style="color:#d4d4d4">;</span></div>
<div class="cl" style="top:420.50px"><span style="color:#d4d4d4">        </span><span style="color:#da70d6">}</span><span style="color:#d4d4d4"> </span><span style="color:#c586c0">elseif</span><span style="color:#d4d4d4"> </span><span style="color:#da70d6">(</span><span style="color:#9cdcfe">$rule</span><span style="color:#d4d4d4"> == </span><span style="color:#ce9178">&#x27;required&#x27;</span><span style="color:#d4d4d4"> &amp;&amp; </span><span style="color:#179fff">(</span><span style="color:#dcdcaa">is_null</span><span style="color:#ffd700">(</span><span style="color:#9cdcfe">$value</span><span style="color:#ffd700">)</span><span style="color:#d4d4d4"> || </span><span style="color:#dcdcaa">empty</span><span style="color:#ffd700">(</span><span style="color:#9cdcfe">$value</span><span style="color:#ffd700">)</span><span style="color:#d4d4d4"> || </span><span style="color:#ffd700">(</span><span style="color:#dcdcaa">isset</span><span style="color:#da70d6">(</span><span style="color:#9cdcfe">$value</span><span style="color:#179fff">[</span><span style="color:#ce9178">&#x27;tmp_name&#x27;</span><span style="color:#179fff">]</span><span style="color:#da70d6">)</span><span style="color:#d4d4d4"> &amp;&amp; </span><span style="color:#dcdcaa">empty</span><span style="color:#da70d6">(</span><span style="color:#9cdcfe">$value</span><span style="color:#179fff">[</span><span style="color:#ce9178">&#x27;tmp_name&#x27;</span></div>
<div class="cl" style="top:445.23px"><span style="color:#d4d4d4">            </span><span style="color:#9cdcfe">$attribute_validate</span><span style="color:#179fff">[]</span><span style="color:#d4d4d4"> = </span><span style="color:#dcdcaa">str_replace</span><span style="color:#179fff">(</span><span style="color:#ce9178">&#x27;:attribute&#x27;</span><span style="color:#d4d4d4">, </span><span style="color:#9cdcfe">$final_attr</span><span style="color:#d4d4d4">, </span><span style="color:#dcdcaa">trans</span><span style="color:#ffd700">(</span><span style="color:#ce9178">&quot;validation.required&quot;</span><span style="color:#ffd700">)</span><span style="color:#179fff">)</span><span style="color:#d4d4d4">;</span></div>
<div class="cl" style="top:469.96px"><span style="color:#d4d4d4">        </span><span style="color:#da70d6">}</span><span style="color:#d4d4d4"> </span><span style="color:#c586c0">elseif</span><span style="color:#d4d4d4"> </span><span style="color:#da70d6">(</span><span style="color:#9cdcfe">$rule</span><span style="color:#d4d4d4"> == </span><span style="color:#ce9178">&#x27;integer&#x27;</span><span style="color:#d4d4d4"> &amp;&amp; !</span><span style="color:#dcdcaa">filter_var</span><span style="color:#179fff">(</span><span style="color:#ffd700">(</span><span style="color:#569cd6">int</span><span style="color:#ffd700">)</span><span style="color:#9cdcfe">$value</span><span style="color:#d4d4d4">, FILTER_VALIDATE_INT</span><span style="color:#179fff">)</span><span style="color:#da70d6">)</span><span style="color:#d4d4d4"> </span><span style="color:#da70d6">{</span></div>
<div class="cl" style="top:494.70px"><span style="color:#d4d4d4">            </span><span style="color:#9cdcfe">$attribute_validate</span><span style="color:#179fff">[]</span><span style="color:#d4d4d4"> = </span><span style="color:#dcdcaa">str_replace</span><span style="color:#179fff">(</span><span style="color:#ce9178">&#x27;:attribute&#x27;</span><span style="color:#d4d4d4">, </span><span style="color:#9cdcfe">$final_attr</span><span style="color:#d4d4d4">, </span><span style="color:#dcdcaa">trans</span><span style="color:#ffd700">(</span><span style="color:#ce9178">&quot;validation.integer&quot;</span><span style="color:#ffd700">)</span><span style="color:#179fff">)</span><span style="color:#d4d4d4">;</span></div>
<div class="cl" style="top:519.43px"><span style="color:#d4d4d4">        </span><span style="color:#da70d6">}</span><span style="color:#d4d4d4"> </span><span style="color:#c586c0">elseif</span><span style="color:#d4d4d4"> </span><span style="color:#da70d6">(</span><span style="color:#9cdcfe">$rule</span><span style="color:#d4d4d4"> == </span><span style="color:#ce9178">&#x27;string&#x27;</span><span style="color:#d4d4d4"> &amp;&amp; </span><span style="color:#179fff">(</span><span style="color:#dcdcaa">empty</span><span style="color:#ffd700">(</span><span style="color:#9cdcfe">$value</span><span style="color:#ffd700">)</span><span style="color:#d4d4d4"> || !</span><span style="color:#dcdcaa">is_string</span><span style="color:#ffd700">(</span><span style="color:#9cdcfe">$value</span><span style="color:#ffd700">)</span><span style="color:#179fff">)</span><span style="color:#da70d6">)</span><span style="color:#d4d4d4"> </span><span style="color:#da70d6">{</span></div>
<div class="cl" style="top:544.17px"><span style="color:#d4d4d4">            </span><span style="color:#9cdcfe">$attribute_validate</span><span style="color:#179fff">[]</span><span style="color:#d4d4d4"> = </span><span style="color:#dcdcaa">str_replace</span><span style="color:#179fff">(</span><span style="color:#ce9178">&#x27;:attribute&#x27;</span><span style="color:#d4d4d4">, </span><span style="color:#9cdcfe">$final_attr</span><span style="color:#d4d4d4">, </span><span style="color:#dcdcaa">trans</span><span style="color:#ffd700">(</span><span style="color:#ce9178">&quot;validation.string&quot;</span><span style="color:#ffd700">)</span><span style="color:#179fff">)</span><span style="color:#d4d4d4">;</span></div>
<div class="cl" style="top:568.90px"><span style="color:#d4d4d4">        </span><span style="color:#da70d6">}</span><span style="color:#d4d4d4"> </span><span style="color:#c586c0">elseif</span><span style="color:#d4d4d4"> </span><span style="color:#da70d6">(</span><span style="color:#9cdcfe">$rule</span><span style="color:#d4d4d4"> == </span><span style="color:#ce9178">&#x27;numbric&#x27;</span><span style="color:#d4d4d4"> &amp;&amp; !</span><span style="color:#dcdcaa">is_numeric</span><span style="color:#179fff">(</span><span style="color:#9cdcfe">$value</span><span style="color:#179fff">)</span><span style="color:#da70d6">)</span><span style="color:#d4d4d4"> </span><span style="color:#da70d6">{</span></div>
<div class="cl" style="top:593.64px"><span style="color:#d4d4d4">            </span><span style="color:#9cdcfe">$attribute_validate</span><span style="color:#179fff">[]</span><span style="color:#d4d4d4"> = </span><span style="color:#dcdcaa">str_replace</span><span style="color:#179fff">(</span><span style="color:#ce9178">&#x27;:attribute&#x27;</span><span style="color:#d4d4d4">, </span><span style="color:#9cdcfe">$final_attr</span><span style="color:#d4d4d4">, </span><span style="color:#dcdcaa">trans</span><span style="color:#ffd700">(</span><span style="color:#ce9178">&quot;validation.numbric&quot;</span><span style="color:#ffd700">)</span><span style="color:#179fff">)</span><span style="color:#d4d4d4">;</span></div>
<div class="cl" style="top:618.38px"><span style="color:#d4d4d4">        </span><span style="color:#da70d6">}</span><span style="color:#d4d4d4"> </span><span style="color:#c586c0">elseif</span><span style="color:#d4d4d4"> </span><span style="color:#da70d6">(</span><span style="color:#9cdcfe">$rule</span><span style="color:#d4d4d4"> == </span><span style="color:#ce9178">&#x27;image&#x27;</span><span style="color:#d4d4d4"> &amp;&amp; </span><span style="color:#179fff">(</span><span style="color:#d4d4d4">!</span><span style="color:#dcdcaa">empty</span><span style="color:#ffd700">(</span><span style="color:#9cdcfe">$value</span><span style="color:#da70d6">[</span><span style="color:#ce9178">&#x27;tmp_name&#x27;</span><span style="color:#da70d6">]</span><span style="color:#ffd700">)</span><span style="color:#d4d4d4"> &amp;&amp; </span><span style="color:#dcdcaa">getimagesize</span><span style="color:#ffd700">(</span><span style="color:#9cdcfe">$value</span><span style="color:#da70d6">[</span><span style="color:#ce9178">&#x27;tmp_name&#x27;</span><span style="color:#da70d6">]</span><span style="color:#ffd700">)</span><span style="color:#d4d4d4"> === </span><span style="color:#569cd6">false</span><span style="color:#179fff">)</span><span style="color:#da70d6">)</span><span style="color:#d4d4d4"> </span><span style="color:#da70d6">{</span></div>
<div class="cl" style="top:643.11px"><span style="color:#d4d4d4">            </span><span style="color:#9cdcfe">$attribute_validate</span><span style="color:#179fff">[]</span><span style="color:#d4d4d4"> = </span><span style="color:#dcdcaa">str_replace</span><span style="color:#179fff">(</span><span style="color:#ce9178">&#x27;:attribute&#x27;</span><span style="color:#d4d4d4">, </span><span style="color:#9cdcfe">$final_attr</span><span style="color:#d4d4d4">, </span><span style="color:#dcdcaa">trans</span><span style="color:#ffd700">(</span><span style="color:#ce9178">&quot;validation.image&quot;</span><span style="color:#ffd700">)</span><span style="color:#179fff">)</span><span style="color:#d4d4d4">;</span></div>
<div class="cl" style="top:667.85px"><span style="color:#d4d4d4">        </span><span style="color:#da70d6">}</span><span style="color:#c586c0">elseif</span><span style="color:#da70d6">(</span><span style="color:#dcdcaa">preg_match</span><span style="color:#179fff">(</span><span style="color:#ce9178">&#x27;/^in:/i&#x27;</span><span style="color:#d4d4d4">,</span><span style="color:#9cdcfe">$rule</span><span style="color:#179fff">)</span><span style="color:#da70d6">){</span></div>
<div class="cl" style="top:692.58px"><span style="color:#d4d4d4">            </span><span style="color:#9cdcfe">$ex_rule</span><span style="color:#d4d4d4"> = </span><span style="color:#dcdcaa">explode</span><span style="color:#179fff">(</span><span style="color:#ce9178">&#x27;:&#x27;</span><span style="color:#d4d4d4">,</span><span style="color:#9cdcfe">$rule</span><span style="color:#179fff">)</span><span style="color:#d4d4d4">;</span></div>
<div class="cl" style="top:717.31px"><span style="color:#d4d4d4">            </span><span style="color:#c586c0">if</span><span style="color:#179fff">(</span><span style="color:#dcdcaa">isset</span><span style="color:#ffd700">(</span><span style="color:#9cdcfe">$ex_rule</span><span style="color:#da70d6">[</span><span style="color:#b5cea8">1</span><span style="color:#da70d6">]</span><span style="color:#ffd700">)</span><span style="color:#179fff">){</span></div>
<div class="cl" style="top:742.05px"><span style="color:#d4d4d4">                </span><span style="color:#9cdcfe">$ex_in</span><span style="color:#d4d4d4">=</span><span style="color:#dcdcaa">explode</span><span style="color:#ffd700">(</span><span style="color:#ce9178">&#x27;,&#x27;</span><span style="color:#d4d4d4">,</span><span style="color:#9cdcfe">$ex_rule</span><span style="color:#da70d6">[</span><span style="color:#b5cea8">1</span><span style="color:#da70d6">]</span><span style="color:#ffd700">)</span><span style="color:#d4d4d4">;</span></div>
<div class="cl" style="top:766.78px"><span style="color:#d4d4d4">                </span><span style="color:#c586c0">if</span><span style="color:#ffd700">(</span><span style="color:#d4d4d4">!</span><span style="color:#dcdcaa">empty</span><span style="color:#da70d6">(</span><span style="color:#9cdcfe">$ex_in</span><span style="color:#da70d6">)</span><span style="color:#d4d4d4"> &amp;&amp; </span><span style="color:#dcdcaa">is_array</span><span style="color:#da70d6">(</span><span style="color:#9cdcfe">$ex_in</span><span style="color:#da70d6">)</span><span style="color:#d4d4d4"> &amp;&amp; !</span><span style="color:#dcdcaa">in_array</span><span style="color:#da70d6">(</span><span style="color:#9cdcfe">$value</span><span style="color:#d4d4d4">,</span><span style="color:#9cdcfe">$ex_in</span><span style="color:#da70d6">)</span><span style="color:#ffd700">){</span></div>
<div class="cl" style="top:791.52px"><span style="color:#d4d4d4">                    </span><span style="color:#9cdcfe">$attribute_validate</span><span style="color:#da70d6">[]</span><span style="color:#d4d4d4"> = </span><span style="color:#dcdcaa">str_replace</span><span style="color:#da70d6">(</span><span style="color:#ce9178">&#x27;:attribute&#x27;</span><span style="color:#d4d4d4">, </span><span style="color:#9cdcfe">$final_attr</span><span style="color:#d4d4d4">, </span><span style="color:#dcdcaa">trans</span><span style="color:#179fff">(</span><span style="color:#ce9178">&quot;validation.in&quot;</span><span style="color:#179fff">)</span><span style="color:#da70d6">)</span><span style="color:#d4d4d4">;</span></div>
<div class="cl" style="top:816.25px"><span style="color:#d4d4d4">                </span><span style="color:#ffd700">}</span></div>
<div class="cl" style="top:840.99px"><span style="color:#d4d4d4">            </span><span style="color:#179fff">}</span></div>
<div class="cl" style="top:865.73px"><span style="color:#d4d4d4">        </span><span style="color:#da70d6">}</span></div>
</div>
<div class="abs" style="left:549px;top:984px;width:1137px;height:16px;background:rgba(121,121,121,0.4)"></div>
<div class="abs" style="left:1777.5px;top:120px;width:5.5px;height:880px;background:linear-gradient(90deg,rgba(0,0,0,0),rgba(0,0,0,0.45))"></div>
<div style="opacity:0.42"><svg class="abs" style="left:1783px;top:120px" width="119" height="400" viewBox="0 0 119 400"><rect x="8.00" y="0.3" width="5.20" height="1.4" fill="#569cd6"/><rect x="8.00" y="6.3" width="2.08" height="1.4" fill="#c586c0"/><rect x="11.12" y="6.3" width="1.04" height="1.4" fill="#ffd700"/><rect x="12.16" y="6.3" width="1.04" height="1.4" fill="#d4d4d4"/><rect x="13.20" y="6.3" width="15.60" height="1.4" fill="#dcdcaa"/><rect x="28.80" y="6.3" width="1.04" height="1.4" fill="#da70d6"/><rect x="29.84" y="6.3" width="12.48" height="1.4" fill="#ce9178"/><rect x="42.32" y="6.3" width="1.04" height="1.4" fill="#da70d6"/><rect x="43.36" y="6.3" width="1.04" height="1.4" fill="#ffd700"/><rect x="45.44" y="6.3" width="1.04" height="1.4" fill="#ffd700"/><rect x="12.16" y="8.3" width="8.32" height="1.4" fill="#569cd6"/><rect x="21.52" y="8.3" width="10.40" height="1.4" fill="#dcdcaa"/><rect x="31.92" y="8.3" width="1.04" height="1.4" fill="#da70d6"/><rect x="32.96" y="8.3" width="5.20" height="1.4" fill="#569cd6"/><rect x="39.20" y="8.3" width="11.44" height="1.4" fill="#9cdcfe"/><rect x="50.64" y="8.3" width="1.04" height="1.4" fill="#d4d4d4"/><rect x="52.72" y="8.3" width="5.20" height="1.4" fill="#569cd6"/><rect x="58.96" y="8.3" width="6.24" height="1.4" fill="#9cdcfe"/><rect x="66.24" y="8.3" width="1.04" height="1.4" fill="#d4d4d4"/><rect x="68.32" y="8.3" width="4.16" height="1.4" fill="#569cd6"/><rect x="72.48" y="8.3" width="1.04" height="1.4" fill="#d4d4d4"/><rect x="74.56" y="8.3" width="12.48" height="1.4" fill="#9cdcfe"/><rect x="88.08" y="8.3" width="1.04" height="1.4" fill="#d4d4d4"/><rect x="90.16" y="8.3" width="10.40" height="1.4" fill="#ce9178"/><rect x="100.56" y="8.3" width="1.04" height="1.4" fill="#d4d4d4"/><rect x="102.64" y="8.3" width="5.20" height="1.4" fill="#9cdcfe"/><rect x="108.88" y="8.3" width="1.04" height="1.4" fill="#d4d4d4"/><rect x="110.96" y="8.3" width="4.16" height="1.4" fill="#569cd6"/><rect x="115.12" y="8.3" width="1.04" height="1.4" fill="#da70d6"/><rect x="12.16" y="10.3" width="1.04" height="1.4" fill="#da70d6"/><rect x="16.32" y="14.3" width="12.48" height="1.4" fill="#9cdcfe"/><rect x="29.84" y="14.3" width="1.04" height="1.4" fill="#d4d4d4"/><rect x="31.92" y="14.3" width="2.08" height="1.4" fill="#179fff"/><rect x="34.00" y="14.3" width="1.04" height="1.4" fill="#d4d4d4"/><rect x="16.32" y="16.3" width="7.28" height="1.4" fill="#9cdcfe"/><rect x="24.64" y="16.3" width="1.04" height="1.4" fill="#d4d4d4"/><rect x="26.72" y="16.3" width="2.08" height="1.4" fill="#179fff"/><rect x="28.80" y="16.3" width="1.04" height="1.4" fill="#d4d4d4"/><rect x="16.32" y="18.3" width="7.28" height="1.4" fill="#c586c0"/><rect x="24.64" y="18.3" width="1.04" height="1.4" fill="#179fff"/><rect x="25.68" y="18.3" width="11.44" height="1.4" fill="#9cdcfe"/><rect x="38.16" y="18.3" width="2.08" height="1.4" fill="#c586c0"/><rect x="41.28" y="18.3" width="10.40" height="1.4" fill="#9cdcfe"/><rect x="52.72" y="18.3" width="2.08" height="1.4" fill="#d4d4d4"/><rect x="55.84" y="18.3" width="6.24" height="1.4" fill="#9cdcfe"/><rect x="62.08" y="18.3" width="1.04" height="1.4" fill="#179fff"/><rect x="64.16" y="18.3" width="1.04" height="1.4" fill="#179fff"/><rect x="20.48" y="20.3" width="6.24" height="1.4" fill="#9cdcfe"/><rect x="27.76" y="20.3" width="1.04" height="1.4" fill="#d4d4d4"/><rect x="29.84" y="20.3" width="7.28" height="1.4" fill="#dcdcaa"/><rect x="37.12" y="20.3" width="1.04" height="1.4" fill="#ffd700"/><rect x="38.16" y="20.3" width="10.40" height="1.4" fill="#9cdcfe"/><rect x="48.56" y="20.3" width="1.04" height="1.4" fill="#ffd700"/><rect x="49.60" y="20.3" width="1.04" height="1.4" fill="#d4d4d4"/><rect x="20.48" y="22.3" width="7.28" height="1.4" fill="#9cdcfe"/><rect x="27.76" y="22.3" width="1.04" height="1.4" fill="#ffd700"/><rect x="28.80" y="22.3" width="10.40" height="1.4" fill="#9cdcfe"/><rect x="39.20" y="22.3" width="1.04" height="1.4" fill="#ffd700"/><rect x="41.28" y="22.3" width="1.04" height="1.4" fill="#d4d4d4"/><rect x="43.36" y="22.3" width="6.24" height="1.4" fill="#9cdcfe"/><rect x="49.60" y="22.3" width="1.04" height="1.4" fill="#d4d4d4"/><rect x="20.48" y="24.3" width="19.76" height="1.4" fill="#9cdcfe"/><rect x="41.28" y="24.3" width="1.04" height="1.4" fill="#d4d4d4"/><rect x="43.36" y="24.3" width="2.08" height="1.4" fill="#ffd700"/><rect x="45.44" y="24.3" width="1.04" height="1.4" fill="#d4d4d4"/><rect x="20.48" y="26.3" width="11.44" height="1.4" fill="#9cdcfe"/><rect x="32.96" y="26.3" width="1.04" height="1.4" fill="#d4d4d4"/><rect x="35.04" y="26.3" width="5.20" height="1.4" fill="#dcdcaa"/><rect x="40.24" y="26.3" width="1.04" height="1.4" fill="#ffd700"/><rect x="41.28" y="26.3" width="6.24" height="1.4" fill="#9cdcfe"/><rect x="47.52" y="26.3" width="1.04" height="1.4" fill="#da70d6"/><rect x="48.56" y="26.3" width="10.40" height="1.4" fill="#9cdcfe"/><rect x="58.96" y="26.3" width="1.04" height="1.4" fill="#da70d6"/><rect x="60.00" y="26.3" width="1.04" height="1.4" fill="#ffd700"/><rect x="62.08" y="26.3" width="1.04" height="1.4" fill="#d4d4d4"/><rect x="64.16" y="26.3" width="6.24" height="1.4" fill="#9cdcfe"/><rect x="70.40" y="26.3" width="1.04" height="1.4" fill="#ffd700"/><rect x="71.44" y="26.3" width="10.40" height="1.4" fill="#9cdcfe"/><rect x="81.84" y="26.3" width="1.04" height="1.4" fill="#ffd700"/><rect x="83.92" y="26.3" width="1.04" height="1.4" fill="#d4d4d4"/><rect x="86.00" y="26.3" width="10.40" height="1.4" fill="#9cdcfe"/><rect x="96.40" y="26.3" width="1.04" height="1.4" fill="#d4d4d4"/><rect x="20.48" y="28.3" width="7.28" height="1.4" fill="#c586c0"/><rect x="28.80" y="28.3" width="1.04" height="1.4" fill="#ffd700"/><rect x="29.84" y="28.3" width="7.28" height="1.4" fill="#dcdcaa"/><rect x="37.12" y="28.3" width="1.04" height="1.4" fill="#da70d6"/><rect x="38.16" y="28.3" width="3.12" height="1.4" fill="#ce9178"/><rect x="41.28" y="28.3" width="1.04" height="1.4" fill="#d4d4d4"/><rect x="43.36" y="28.3" width="6.24" height="1.4" fill="#9cdcfe"/><rect x="49.60" y="28.3" width="1.04" height="1.4" fill="#da70d6"/><rect x="51.68" y="28.3" width="2.08" height="1.4" fill="#c586c0"/><rect x="54.80" y="28.3" width="5.20" height="1.4" fill="#9cdcfe"/><rect x="60.00" y="28.3" width="1.04" height="1.4" fill="#ffd700"/><rect x="62.08" y="28.3" width="1.04" height="1.4" fill="#ffd700"/><rect x="24.64" y="30.3" width="2.08" height="1.4" fill="#c586c0"/><rect x="27.76" y="30.3" width="1.04" height="1.4" fill="#da70d6"/><rect x="28.80" y="30.3" width="5.20" height="1.4" fill="#9cdcfe"/><rect x="35.04" y="30.3" width="2.08" height="1.4" fill="#d4d4d4"/><rect x="38.16" y="30.3" width="7.28" height="1.4" fill="#ce9178"/><rect x="46.48" y="30.3" width="2.08" height="1.4" fill="#d4d4d4"/><rect x="49.60" y="30.3" width="1.04" height="1.4" fill="#d4d4d4"/><rect x="50.64" y="30.3" width="10.40" height="1.4" fill="#dcdcaa"/><rect x="61.04" y="30.3" width="1.04" height="1.4" fill="#179fff"/><rect x="62.08" y="30.3" width="6.24" height="1.4" fill="#9cdcfe"/><rect x="68.32" y="30.3" width="1.04" height="1.4" fill="#d4d4d4"/><rect x="70.40" y="30.3" width="21.84" height="1.4" fill="#d4d4d4"/><rect x="92.24" y="30.3" width="1.04" height="1.4" fill="#179fff"/><rect x="93.28" y="30.3" width="1.04" height="1.4" fill="#da70d6"/><rect x="95.36" y="30.3" width="1.04" height="1.4" fill="#da70d6"/><rect x="28.80" y="32.3" width="19.76" height="1.4" fill="#9cdcfe"/><rect x="48.56" y="32.3" width="2.08" height="1.4" fill="#179fff"/><rect x="51.68" y="32.3" width="1.04" height="1.4" fill="#d4d4d4"/><rect x="53.76" y="32.3" width="11.44" height="1.4" fill="#dcdcaa"/><rect x="65.20" y="32.3" width="1.04" height="1.4" fill="#179fff"/><rect x="66.24" y="32.3" width="12.48" height="1.4" fill="#ce9178"/><rect x="78.72" y="32.3" width="1.04" height="1.4" fill="#d4d4d4"/><rect x="80.80" y="32.3" width="11.44" height="1.4" fill="#9cdcfe"/><rect x="92.24" y="32.3" width="1.04" height="1.4" fill="#d4d4d4"/><rect x="94.32" y="32.3" width="5.20" height="1.4" fill="#dcdcaa"/><rect x="99.52" y="32.3" width="1.04" height="1.4" fill="#ffd700"/><rect x="100.56" y="32.3" width="18.72" height="1.4" fill="#ce9178"/><rect x="24.64" y="34.3" width="1.04" height="1.4" fill="#da70d6"/><rect x="26.72" y="34.3" width="6.24" height="1.4" fill="#c586c0"/><rect x="34.00" y="34.3" width="1.04" height="1.4" fill="#da70d6"/><rect x="35.04" y="34.3" width="5.20" height="1.4" fill="#9cdcfe"/><rect x="41.28" y="34.3" width="2.08" height="1.4" fill="#d4d4d4"/><rect x="44.40" y="34.3" width="10.40" height="1.4" fill="#ce9178"/><rect x="55.84" y="34.3" width="2.08" height="1.4" fill="#d4d4d4"/><rect x="58.96" y="34.3" width="1.04" height="1.4" fill="#179fff"/><rect x="60.00" y="34.3" width="7.28" height="1.4" fill="#dcdcaa"/><rect x="67.28" y="34.3" width="1.04" height="1.4" fill="#ffd700"/><rect x="68.32" y="34.3" width="6.24" height="1.4" fill="#9cdcfe"/><rect x="74.56" y="34.3" width="1.04" height="1.4" fill="#ffd700"/><rect x="76.64" y="34.3" width="2.08" height="1.4" fill="#d4d4d4"/><rect x="79.76" y="34.3" width="5.20" height="1.4" fill="#dcdcaa"/><rect x="84.96" y="34.3" width="1.04" height="1.4" fill="#ffd700"/><rect x="86.00" y="34.3" width="6.24" height="1.4" fill="#9cdcfe"/><rect x="92.24" y="34.3" width="1.04" height="1.4" fill="#ffd700"/><rect x="94.32" y="34.3" width="2.08" height="1.4" fill="#d4d4d4"/><rect x="97.44" y="34.3" width="1.04" height="1.4" fill="#ffd700"/><rect x="98.48" y="34.3" width="5.20" height="1.4" fill="#dcdcaa"/><rect x="103.68" y="34.3" width="1.04" height="1.4" fill="#da70d6"/><rect x="104.72" y="34.3" width="6.24" height="1.4" fill="#9cdcfe"/><rect x="110.96" y="34.3" width="1.04" height="1.4" fill="#179fff"/><rect x="112.00" y="34.3" width="10.40" height="1.4" fill="#ce9178"/><rect x="28.80" y="36.3" width="19.76" height="1.4" fill="#9cdcfe"/><rect x="48.56" y="36.3" width="2.08" height="1.4" fill="#179fff"/><rect x="51.68" y="36.3" width="1.04" height="1.4" fill="#d4d4d4"/><rect x="53.76" y="36.3" width="11.44" height="1.4" fill="#dcdcaa"/><rect x="65.20" y="36.3" width="1.04" height="1.4" fill="#179fff"/><rect x="66.24" y="36.3" width="12.48" height="1.4" fill="#ce9178"/><rect x="78.72" y="36.3" width="1.04" height="1.4" fill="#d4d4d4"/><rect x="80.80" y="36.3" width="11.44" height="1.4" fill="#9cdcfe"/><rect x="92.24" y="36.3" width="1.04" height="1.4" fill="#d4d4d4"/><rect x="94.32" y="36.3" width="5.20" height="1.4" fill="#dcdcaa"/><rect x="99.52" y="36.3" width="1.04" height="1.4" fill="#ffd700"/><rect x="100.56" y="36.3" width="21.84" height="1.4" fill="#ce9178"/><rect x="24.64" y="38.3" width="1.04" height="1.4" fill="#da70d6"/><rect x="26.72" y="38.3" width="6.24" height="1.4" fill="#c586c0"/><rect x="34.00" y="38.3" width="1.04" height="1.4" fill="#da70d6"/><rect x="35.04" y="38.3" width="5.20" height="1.4" fill="#9cdcfe"/><rect x="41.28" y="38.3" width="2.08" height="1.4" fill="#d4d4d4"/><rect x="44.40" y="38.3" width="9.36" height="1.4" fill="#ce9178"/><rect x="54.80" y="38.3" width="2.08" height="1.4" fill="#d4d4d4"/><rect x="57.92" y="38.3" width="1.04" height="1.4" fill="#d4d4d4"/><rect x="58.96" y="38.3" width="10.40" height="1.4" fill="#dcdcaa"/><rect x="69.36" y="38.3" width="1.04" height="1.4" fill="#179fff"/><rect x="70.40" y="38.3" width="1.04" height="1.4" fill="#ffd700"/><rect x="71.44" y="38.3" width="3.12" height="1.4" fill="#569cd6"/><rect x="74.56" y="38.3" width="1.04" height="1.4" fill="#ffd700"/><rect x="75.60" y="38.3" width="6.24" height="1.4" fill="#9cdcfe"/><rect x="81.84" y="38.3" width="1.04" height="1.4" fill="#d4d4d4"/><rect x="83.92" y="38.3" width="19.76" height="1.4" fill="#d4d4d4"/><rect x="103.68" y="38.3" width="1.04" height="1.4" fill="#179fff"/><rect x="104.72" y="38.3" width="1.04" height="1.4" fill="#da70d6"/><rect x="106.80" y="38.3" width="1.04" height="1.4" fill="#da70d6"/><rect x="28.80" y="40.3" width="19.76" height="1.4" fill="#9cdcfe"/><rect x="48.56" y="40.3" width="2.08" height="1.4" fill="#179fff"/><rect x="51.68" y="40.3" width="1.04" height="1.4" fill="#d4d4d4"/><rect x="53.76" y="40.3" width="11.44" height="1.4" fill="#dcdcaa"/><rect x="65.20" y="40.3" width="1.04" height="1.4" fill="#179fff"/><rect x="66.24" y="40.3" width="12.48" height="1.4" fill="#ce9178"/><rect x="78.72" y="40.3" width="1.04" height="1.4" fill="#d4d4d4"/><rect x="80.80" y="40.3" width="11.44" height="1.4" fill="#9cdcfe"/><rect x="92.24" y="40.3" width="1.04" height="1.4" fill="#d4d4d4"/><rect x="94.32" y="40.3" width="5.20" height="1.4" fill="#dcdcaa"/><rect x="99.52" y="40.3" width="1.04" height="1.4" fill="#ffd700"/><rect x="100.56" y="40.3" width="20.80" height="1.4" fill="#ce9178"/><rect x="24.64" y="42.3" width="1.04" height="1.4" fill="#da70d6"/><rect x="26.72" y="42.3" width="6.24" height="1.4" fill="#c586c0"/><rect x="34.00" y="42.3" width="1.04" height="1.4" fill="#da70d6"/><rect x="35.04" y="42.3" width="5.20" height="1.4" fill="#9cdcfe"/><rect x="41.28" y="42.3" width="2.08" height="1.4" fill="#d4d4d4"/><rect x="44.40" y="42.3" width="8.32" height="1.4" fill="#ce9178"/><rect x="53.76" y="42.3" width="2.08" height="1.4" fill="#d4d4d4"/><rect x="56.88" y="42.3" width="1.04" height="1.4" fill="#179fff"/><rect x="57.92" y="42.3" width="5.20" height="1.4" fill="#dcdcaa"/><rect x="63.12" y="42.3" width="1.04" height="1.4" fill="#ffd700"/><rect x="64.16" y="42.3" width="6.24" height="1.4" fill="#9cdcfe"/><rect x="70.40" y="42.3" width="1.04" height="1.4" fill="#ffd700"/><rect x="72.48" y="42.3" width="2.08" height="1.4" fill="#d4d4d4"/><rect x="75.60" y="42.3" width="1.04" height="1.4" fill="#d4d4d4"/><rect x="76.64" y="42.3" width="9.36" height="1.4" fill="#dcdcaa"/><rect x="86.00" y="42.3" width="1.04" height="1.4" fill="#ffd700"/><rect x="87.04" y="42.3" width="6.24" height="1.4" fill="#9cdcfe"/><rect x="93.28" y="42.3" width="1.04" height="1.4" fill="#ffd700"/><rect x="94.32" y="42.3" width="1.04" height="1.4" fill="#179fff"/><rect x="95.36" y="42.3" width="1.04" height="1.4" fill="#da70d6"/><rect x="97.44" y="42.3" width="1.04" height="1.4" fill="#da70d6"/><rect x="28.80" y="44.3" width="19.76" height="1.4" fill="#9cdcfe"/><rect x="48.56" y="44.3" width="2.08" height="1.4" fill="#179fff"/><rect x="51.68" y="44.3" width="1.04" height="1.4" fill="#d4d4d4"/><rect x="53.76" y="44.3" width="11.44" height="1.4" fill="#dcdcaa"/><rect x="65.20" y="44.3" width="1.04" height="1.4" fill="#179fff"/><rect x="66.24" y="44.3" width="12.48" height="1.4" fill="#ce9178"/><rect x="78.72" y="44.3" width="1.04" height="1.4" fill="#d4d4d4"/><rect x="80.80" y="44.3" width="11.44" height="1.4" fill="#9cdcfe"/><rect x="92.24" y="44.3" width="1.04" height="1.4" fill="#d4d4d4"/><rect x="94.32" y="44.3" width="5.20" height="1.4" fill="#dcdcaa"/><rect x="99.52" y="44.3" width="1.04" height="1.4" fill="#ffd700"/><rect x="100.56" y="44.3" width="19.76" height="1.4" fill="#ce9178"/><rect x="24.64" y="46.3" width="1.04" height="1.4" fill="#da70d6"/><rect x="26.72" y="46.3" width="6.24" height="1.4" fill="#c586c0"/><rect x="34.00" y="46.3" width="1.04" height="1.4" fill="#da70d6"/><rect x="35.04" y="46.3" width="5.20" height="1.4" fill="#9cdcfe"/><rect x="41.28" y="46.3" width="2.08" height="1.4" fill="#d4d4d4"/><rect x="44.40" y="46.3" width="9.36" height="1.4" fill="#ce9178"/><rect x="54.80" y="46.3" width="2.08" height="1.4" fill="#d4d4d4"/><rect x="57.92" y="46.3" width="1.04" height="1.4" fill="#d4d4d4"/><rect x="58.96" y="46.3" width="10.40" height="1.4" fill="#dcdcaa"/><rect x="69.36" y="46.3" width="1.04" height="1.4" fill="#179fff"/><rect x="70.40" y="46.3" width="6.24" height="1.4" fill="#9cdcfe"/><rect x="76.64" y="46.3" width="1.04" height="1.4" fill="#179fff"/><rect x="77.68" y="46.3" width="1.04" height="1.4" fill="#da70d6"/><rect x="79.76" y="46.3" width="1.04" height="1.4" fill="#da70d6"/><rect x="28.80" y="48.3" width="19.76" height="1.4" fill="#9cdcfe"/><rect x="48.56" y="48.3" width="2.08" height="1.4" fill="#179fff"/><rect x="51.68" y="48.3" width="1.04" height="1.4" fill="#d4d4d4"/><rect x="53.76" y="48.3" width="11.44" height="1.4" fill="#dcdcaa"/><rect x="65.20" y="48.3" width="1.04" height="1.4" fill="#179fff"/><rect x="66.24" y="48.3" width="12.48" height="1.4" fill="#ce9178"/><rect x="78.72" y="48.3" width="1.04" height="1.4" fill="#d4d4d4"/><rect x="80.80" y="48.3" width="11.44" height="1.4" fill="#9cdcfe"/><rect x="92.24" y="48.3" width="1.04" height="1.4" fill="#d4d4d4"/><rect x="94.32" y="48.3" width="5.20" height="1.4" fill="#dcdcaa"/><rect x="99.52" y="48.3" width="1.04" height="1.4" fill="#ffd700"/><rect x="100.56" y="48.3" width="20.80" height="1.4" fill="#ce9178"/><rect x="24.64" y="50.3" width="1.04" height="1.4" fill="#da70d6"/><rect x="26.72" y="50.3" width="6.24" height="1.4" fill="#c586c0"/><rect x="34.00" y="50.3" width="1.04" height="1.4" fill="#da70d6"/><rect x="35.04" y="50.3" width="5.20" height="1.4" fill="#9cdcfe"/><rect x="41.28" y="50.3" width="2.08" height="1.4" fill="#d4d4d4"/><rect x="44.40" y="50.3" width="7.28" height="1.4" fill="#ce9178"/><rect x="52.72" y="50.3" width="2.08" height="1.4" fill="#d4d4d4"/><rect x="55.84" y="50.3" width="1.04" height="1.4" fill="#179fff"/><rect x="56.88" y="50.3" width="1.04" height="1.4" fill="#d4d4d4"/><rect x="57.92" y="50.3" width="5.20" height="1.4" fill="#dcdcaa"/><rect x="63.12" y="50.3" width="1.04" height="1.4" fill="#ffd700"/><rect x="64.16" y="50.3" width="6.24" height="1.4" fill="#9cdcfe"/><rect x="70.40" y="50.3" width="1.04" height="1.4" fill="#da70d6"/><rect x="71.44" y="50.3" width="10.40" height="1.4" fill="#ce9178"/><rect x="81.84" y="50.3" width="1.04" height="1.4" fill="#da70d6"/><rect x="82.88" y="50.3" width="1.04" height="1.4" fill="#ffd700"/><rect x="84.96" y="50.3" width="2.08" height="1.4" fill="#d4d4d4"/><rect x="88.08" y="50.3" width="12.48" height="1.4" fill="#dcdcaa"/><rect x="100.56" y="50.3" width="1.04" height="1.4" fill="#ffd700"/><rect x="101.60" y="50.3" width="6.24" height="1.4" fill="#9cdcfe"/><rect x="107.84" y="50.3" width="1.04" height="1.4" fill="#da70d6"/><rect x="108.88" y="50.3" width="10.40" height="1.4" fill="#ce9178"/><rect x="28.80" y="52.3" width="19.76" height="1.4" fill="#9cdcfe"/><rect x="48.56" y="52.3" width="2.08" height="1.4" fill="#179fff"/><rect x="51.68" y="52.3" width="1.04" height="1.4" fill="#d4d4d4"/><rect x="53.76" y="52.3" width="11.44" height="1.4" fill="#dcdcaa"/><rect x="65.20" y="52.3" width="1.04" height="1.4" fill="#179fff"/><rect x="66.24" y="52.3" width="12.48" height="1.4" fill="#ce9178"/><rect x="78.72" y="52.3" width="1.04" height="1.4" fill="#d4d4d4"/><rect x="80.80" y="52.3" width="11.44" height="1.4" fill="#9cdcfe"/><rect x="92.24" y="52.3" width="1.04" height="1.4" fill="#d4d4d4"/><rect x="94.32" y="52.3" width="5.20" height="1.4" fill="#dcdcaa"/><rect x="99.52" y="52.3" width="1.04" height="1.4" fill="#ffd700"/><rect x="100.56" y="52.3" width="18.72" height="1.4" fill="#ce9178"/><rect x="24.64" y="54.3" width="1.04" height="1.4" fill="#da70d6"/><rect x="25.68" y="54.3" width="6.24" height="1.4" fill="#c586c0"/><rect x="31.92" y="54.3" width="1.04" height="1.4" fill="#da70d6"/><rect x="32.96" y="54.3" width="10.40" height="1.4" fill="#dcdcaa"/><rect x="43.36" y="54.3" width="1.04" height="1.4" fill="#179fff"/><rect x="44.40" y="54.3" width="9.36" height="1.4" fill="#ce9178"/><rect x="53.76" y="54.3" width="1.04" height="1.4" fill="#d4d4d4"/><rect x="54.80" y="54.3" width="5.20" height="1.4" fill="#9cdcfe"/><rect x="60.00" y="54.3" width="1.04" height="1.4" fill="#179fff"/><rect x="61.04" y="54.3" width="2.08" height="1.4" fill="#da70d6"/><rect x="28.80" y="56.3" width="8.32" height="1.4" fill="#9cdcfe"/><rect x="38.16" y="56.3" width="1.04" height="1.4" fill="#d4d4d4"/><rect x="40.24" y="56.3" width="7.28" height="1.4" fill="#dcdcaa"/><rect x="47.52" y="56.3" width="1.04" height="1.4" fill="#179fff"/><rect x="48.56" y="56.3" width="3.12" height="1.4" fill="#ce9178"/><rect x="51.68" y="56.3" width="1.04" height="1.4" fill="#d4d4d4"/><rect x="52.72" y="56.3" width="5.20" height="1.4" fill="#9cdcfe"/><rect x="57.92" y="56.3" width="1.04" height="1.4" fill="#179fff"/><rect x="58.96" y="56.3" width="1.04" height="1.4" fill="#d4d4d4"/><rect x="28.80" y="58.3" width="2.08" height="1.4" fill="#c586c0"/><rect x="30.88" y="58.3" width="1.04" height="1.4" fill="#179fff"/><rect x="31.92" y="58.3" width="5.20" height="1.4" fill="#dcdcaa"/><rect x="37.12" y="58.3" width="1.04" height="1.4" fill="#ffd700"/><rect x="38.16" y="58.3" width="8.32" height="1.4" fill="#9cdcfe"/><rect x="46.48" y="58.3" width="1.04" height="1.4" fill="#da70d6"/><rect x="47.52" y="58.3" width="1.04" height="1.4" fill="#b5cea8"/><rect x="48.56" y="58.3" width="1.04" height="1.4" fill="#da70d6"/><rect x="49.60" y="58.3" width="1.04" height="1.4" fill="#ffd700"/><rect x="50.64" y="58.3" width="2.08" height="1.4" fill="#179fff"/><rect x="32.96" y="60.3" width="6.24" height="1.4" fill="#9cdcfe"/><rect x="39.20" y="60.3" width="1.04" height="1.4" fill="#d4d4d4"/><rect x="40.24" y="60.3" width="7.28" height="1.4" fill="#dcdcaa"/><rect x="47.52" y="60.3" width="1.04" height="1.4" fill="#ffd700"/><rect x="48.56" y="60.3" width="3.12" height="1.4" fill="#ce9178"/><rect x="51.68" y="60.3" width="1.04" height="1.4" fill="#d4d4d4"/><rect x="52.72" y="60.3" width="8.32" height="1.4" fill="#9cdcfe"/><rect x="61.04" y="60.3" width="1.04" height="1.4" fill="#da70d6"/><rect x="62.08" y="60.3" width="1.04" height="1.4" fill="#b5cea8"/><rect x="63.12" y="60.3" width="1.04" height="1.4" fill="#da70d6"/><rect x="64.16" y="60.3" width="1.04" height="1.4" fill="#ffd700"/><rect x="65.20" y="60.3" width="1.04" height="1.4" fill="#d4d4d4"/><rect x="32.96" y="62.3" width="2.08" height="1.4" fill="#c586c0"/><rect x="35.04" y="62.3" width="1.04" height="1.4" fill="#ffd700"/><rect x="36.08" y="62.3" width="1.04" height="1.4" fill="#d4d4d4"/><rect x="37.12" y="62.3" width="5.20" height="1.4" fill="#dcdcaa"/><rect x="42.32" y="62.3" width="1.04" height="1.4" fill="#da70d6"/><rect x="43.36" y="62.3" width="6.24" height="1.4" fill="#9cdcfe"/><rect x="49.60" y="62.3" width="1.04" height="1.4" fill="#da70d6"/><rect x="51.68" y="62.3" width="2.08" height="1.4" fill="#d4d4d4"/><rect x="54.80" y="62.3" width="8.32" height="1.4" fill="#dcdcaa"/><rect x="63.12" y="62.3" width="1.04" height="1.4" fill="#da70d6"/><rect x="64.16" y="62.3" width="6.24" height="1.4" fill="#9cdcfe"/><rect x="70.40" y="62.3" width="1.04" height="1.4" fill="#da70d6"/><rect x="72.48" y="62.3" width="2.08" height="1.4" fill="#d4d4d4"/><rect x="75.60" y="62.3" width="1.04" height="1.4" fill="#d4d4d4"/><rect x="76.64" y="62.3" width="8.32" height="1.4" fill="#dcdcaa"/><rect x="84.96" y="62.3" width="1.04" height="1.4" fill="#da70d6"/><rect x="86.00" y="62.3" width="6.24" height="1.4" fill="#9cdcfe"/><rect x="92.24" y="62.3" width="1.04" height="1.4" fill="#d4d4d4"/><rect x="93.28" y="62.3" width="6.24" height="1.4" fill="#9cdcfe"/><rect x="99.52" y="62.3" width="1.04" height="1.4" fill="#da70d6"/><rect x="100.56" y="62.3" width="2.08" height="1.4" fill="#ffd700"/><rect x="37.12" y="64.3" width="19.76" height="1.4" fill="#9cdcfe"/><rect x="56.88" y="64.3" width="2.08" height="1.4" fill="#da70d6"/><rect x="60.00" y="64.3" width="1.04" height="1.4" fill="#d4d4d4"/><rect x="62.08" y="64.3" width="11.44" height="1.4" fill="#dcdcaa"/><rect x="73.52" y="64.3" width="1.04" height="1.4" fill="#da70d6"/><rect x="74.56" y="64.3" width="12.48" height="1.4" fill="#ce9178"/><rect x="87.04" y="64.3" width="1.04" height="1.4" fill="#d4d4d4"/><rect x="89.12" y="64.3" width="11.44" height="1.4" fill="#9cdcfe"/><rect x="100.56" y="64.3" width="1.04" height="1.4" fill="#d4d4d4"/><rect x="102.64" y="64.3" width="5.20" height="1.4" fill="#dcdcaa"/><rect x="107.84" y="64.3" width="1.04" height="1.4" fill="#179fff"/><rect x="108.88" y="64.3" width="15.60" height="1.4" fill="#ce9178"/><rect x="32.96" y="66.3" width="1.04" height="1.4" fill="#ffd700"/><rect x="28.80" y="68.3" width="1.04" height="1.4" fill="#179fff"/><rect x="24.64" y="70.3" width="1.04" height="1.4" fill="#da70d6"/><rect x="24.64" y="72.3" width="2.08" height="1.4" fill="#c586c0"/><rect x="27.76" y="72.3" width="1.04" height="1.4" fill="#da70d6"/><rect x="28.80" y="72.3" width="1.04" height="1.4" fill="#d4d4d4"/><rect x="29.84" y="72.3" width="5.20" height="1.4" fill="#dcdcaa"/><rect x="35.04" y="72.3" width="1.04" height="1.4" fill="#da70d6"/><rect x="36.08" y="72.3" width="19.76" height="1.4" fill="#9cdcfe"/><rect x="55.84" y="72.3" width="1.04" height="1.4" fill="#da70d6"/><rect x="57.92" y="72.3" width="2.08" height="1.4" fill="#d4d4d4"/><rect x="61.04" y="72.3" width="6.24" height="1.4" fill="#d4d4d4"/><rect x="28.80" y="74.3" width="19.76" height="1.4" fill="#9cdcfe"/><rect x="48.56" y="74.3" width="2.08" height="1.4" fill="#179fff"/><rect x="51.68" y="74.3" width="1.04" height="1.4" fill="#d4d4d4"/><rect x="53.76" y="74.3" width="5.20" height="1.4" fill="#d4d4d4"/><rect x="28.80" y="76.3" width="19.76" height="1.4" fill="#9cdcfe"/><rect x="48.56" y="76.3" width="2.08" height="1.4" fill="#ffd700"/><rect x="51.68" y="76.3" width="1.04" height="1.4" fill="#d4d4d4"/><rect x="53.76" y="76.3" width="11.44" height="1.4" fill="#dcdcaa"/><rect x="65.20" y="76.3" width="1.04" height="1.4" fill="#ffd700"/><rect x="66.24" y="76.3" width="8.32" height="1.4" fill="#ce9178"/><rect x="32.96" y="78.3" width="19.76" height="1.4" fill="#9cdcfe"/><rect x="52.72" y="78.3" width="2.08" height="1.4" fill="#da70d6"/><rect x="55.84" y="78.3" width="1.04" height="1.4" fill="#d4d4d4"/><rect x="57.92" y="78.3" width="11.44" height="1.4" fill="#dcdcaa"/><rect x="69.36" y="78.3" width="1.04" height="1.4" fill="#da70d6"/><rect x="70.40" y="78.3" width="7.28" height="1.4" fill="#ce9178"/><rect x="32.96" y="82.3" width="19.76" height="1.4" fill="#9cdcfe"/><rect x="52.72" y="82.3" width="2.08" height="1.4" fill="#ffd700"/><rect x="55.84" y="82.3" width="1.04" height="1.4" fill="#d4d4d4"/><rect x="57.92" y="82.3" width="4.16" height="1.4" fill="#d4d4d4"/><rect x="32.96" y="84.3" width="19.76" height="1.4" fill="#9cdcfe"/><rect x="52.72" y="84.3" width="2.08" height="1.4" fill="#da70d6"/><rect x="55.84" y="84.3" width="1.04" height="1.4" fill="#d4d4d4"/><rect x="57.92" y="84.3" width="11.44" height="1.4" fill="#dcdcaa"/><rect x="69.36" y="84.3" width="1.04" height="1.4" fill="#da70d6"/><rect x="70.40" y="84.3" width="12.48" height="1.4" fill="#ce9178"/><rect x="82.88" y="84.3" width="1.04" height="1.4" fill="#d4d4d4"/><rect x="84.96" y="84.3" width="11.44" height="1.4" fill="#9cdcfe"/><rect x="96.40" y="84.3" width="1.04" height="1.4" fill="#d4d4d4"/><rect x="98.48" y="84.3" width="5.20" height="1.4" fill="#dcdcaa"/><rect x="103.68" y="84.3" width="1.04" height="1.4" fill="#da70d6"/><rect x="104.72" y="84.3" width="5.20" height="1.4" fill="#ce9178"/><rect x="32.96" y="88.3" width="2.08" height="1.4" fill="#c586c0"/><rect x="36.08" y="88.3" width="1.04" height="1.4" fill="#ffd700"/><rect x="37.12" y="88.3" width="1.04" height="1.4" fill="#d4d4d4"/><rect x="38.16" y="88.3" width="5.20" height="1.4" fill="#dcdcaa"/><rect x="43.36" y="88.3" width="1.04" height="1.4" fill="#ffd700"/><rect x="44.40" y="88.3" width="19.76" height="1.4" fill="#9cdcfe"/><rect x="64.16" y="88.3" width="1.04" height="1.4" fill="#ffd700"/><rect x="37.12" y="90.3" width="19.76" height="1.4" fill="#9cdcfe"/><rect x="56.88" y="90.3" width="2.08" height="1.4" fill="#da70d6"/><rect x="60.00" y="90.3" width="1.04" height="1.4" fill="#d4d4d4"/><rect x="62.08" y="90.3" width="11.44" height="1.4" fill="#dcdcaa"/><rect x="73.52" y="90.3" width="1.04" height="1.4" fill="#da70d6"/><rect x="74.56" y="90.3" width="12.48" height="1.4" fill="#ce9178"/><rect x="87.04" y="90.3" width="1.04" height="1.4" fill="#d4d4d4"/><rect x="89.12" y="90.3" width="11.44" height="1.4" fill="#9cdcfe"/><rect x="100.56" y="90.3" width="1.04" height="1.4" fill="#d4d4d4"/><rect x="102.64" y="90.3" width="5.20" height="1.4" fill="#dcdcaa"/><rect x="107.84" y="90.3" width="1.04" height="1.4" fill="#da70d6"/><rect x="108.88" y="90.3" width="3.12" height="1.4" fill="#ce9178"/><rect x="32.96" y="92.3" width="1.04" height="1.4" fill="#179fff"/><rect x="35.04" y="92.3" width="4.16" height="1.4" fill="#c586c0"/><rect x="37.12" y="94.3" width="19.76" height="1.4" fill="#9cdcfe"/><rect x="56.88" y="94.3" width="2.08" height="1.4" fill="#ffd700"/><rect x="60.00" y="94.3" width="1.04" height="1.4" fill="#d4d4d4"/><rect x="62.08" y="94.3" width="11.44" height="1.4" fill="#dcdcaa"/><rect x="73.52" y="94.3" width="1.04" height="1.4" fill="#ffd700"/><rect x="74.56" y="94.3" width="1.04" height="1.4" fill="#ce9178"/><rect x="32.96" y="96.3" width="1.04" height="1.4" fill="#da70d6"/><rect x="32.96" y="100.3" width="19.76" height="1.4" fill="#9cdcfe"/><rect x="52.72" y="100.3" width="2.08" height="1.4" fill="#ffd700"/><rect x="55.84" y="100.3" width="1.04" height="1.4" fill="#d4d4d4"/><rect x="57.92" y="100.3" width="11.44" height="1.4" fill="#dcdcaa"/><rect x="69.36" y="100.3" width="1.04" height="1.4" fill="#ffd700"/><rect x="70.40" y="100.3" width="4.16" height="1.4" fill="#ce9178"/><rect x="32.96" y="104.3" width="2.08" height="1.4" fill="#c586c0"/><rect x="36.08" y="104.3" width="1.04" height="1.4" fill="#179fff"/><rect x="37.12" y="104.3" width="1.04" height="1.4" fill="#d4d4d4"/><rect x="38.16" y="104.3" width="5.20" height="1.4" fill="#dcdcaa"/><rect x="43.36" y="104.3" width="1.04" height="1.4" fill="#179fff"/><rect x="44.40" y="104.3" width="18.72" height="1.4" fill="#9cdcfe"/><rect x="37.12" y="106.3" width="19.76" height="1.4" fill="#9cdcfe"/><rect x="56.88" y="106.3" width="2.08" height="1.4" fill="#ffd700"/><rect x="60.00" y="106.3" width="1.04" height="1.4" fill="#d4d4d4"/><rect x="62.08" y="106.3" width="11.44" height="1.4" fill="#dcdcaa"/><rect x="73.52" y="106.3" width="1.04" height="1.4" fill="#ffd700"/><rect x="74.56" y="106.3" width="12.48" height="1.4" fill="#ce9178"/><rect x="87.04" y="106.3" width="1.04" height="1.4" fill="#d4d4d4"/><rect x="89.12" y="106.3" width="11.44" height="1.4" fill="#9cdcfe"/><rect x="100.56" y="106.3" width="1.04" height="1.4" fill="#d4d4d4"/><rect x="102.64" y="106.3" width="5.20" height="1.4" fill="#dcdcaa"/><rect x="107.84" y="106.3" width="1.04" height="1.4" fill="#ffd700"/><rect x="108.88" y="106.3" width="17.68" height="1.4" fill="#ce9178"/><rect x="32.96" y="108.3" width="1.04" height="1.4" fill="#da70d6"/><rect x="28.80" y="110.3" width="1.04" height="1.4" fill="#179fff"/><rect x="24.64" y="112.3" width="1.04" height="1.4" fill="#ffd700"/><rect x="20.48" y="114.3" width="1.04" height="1.4" fill="#da70d6"/><rect x="20.48" y="116.3" width="2.08" height="1.4" fill="#c586c0"/><rect x="23.60" y="116.3" width="1.04" height="1.4" fill="#179fff"/><rect x="24.64" y="116.3" width="1.04" height="1.4" fill="#d4d4d4"/><rect x="25.68" y="116.3" width="5.20" height="1.4" fill="#dcdcaa"/><rect x="30.88" y="116.3" width="1.04" height="1.4" fill="#179fff"/><rect x="31.92" y="116.3" width="19.76" height="1.4" fill="#9cdcfe"/><rect x="51.68" y="116.3" width="1.04" height="1.4" fill="#179fff"/><rect x="53.76" y="116.3" width="2.08" height="1.4" fill="#d4d4d4"/><rect x="56.88" y="116.3" width="8.32" height="1.4" fill="#dcdcaa"/><rect x="65.20" y="116.3" width="1.04" height="1.4" fill="#179fff"/><rect x="66.24" y="116.3" width="10.40" height="1.4" fill="#9cdcfe"/><rect x="76.64" y="116.3" width="2.08" height="1.4" fill="#179fff"/><rect x="79.76" y="116.3" width="1.04" height="1.4" fill="#179fff"/><rect x="81.84" y="116.3" width="7.28" height="1.4" fill="#9cdcfe"/><rect x="89.12" y="116.3" width="1.04" height="1.4" fill="#179fff"/><rect x="90.16" y="116.3" width="10.40" height="1.4" fill="#9cdcfe"/><rect x="100.56" y="116.3" width="1.04" height="1.4" fill="#179fff"/><rect x="102.64" y="116.3" width="1.04" height="1.4" fill="#d4d4d4"/><rect x="104.72" y="116.3" width="14.56" height="1.4" fill="#9cdcfe"/><rect x="24.64" y="118.3" width="19.76" height="1.4" fill="#9cdcfe"/><rect x="44.40" y="118.3" width="2.08" height="1.4" fill="#ffd700"/><rect x="47.52" y="118.3" width="1.04" height="1.4" fill="#d4d4d4"/><rect x="49.60" y="118.3" width="11.44" height="1.4" fill="#dcdcaa"/><rect x="61.04" y="118.3" width="1.04" height="1.4" fill="#ffd700"/><rect x="62.08" y="118.3" width="11.44" height="1.4" fill="#ce9178"/><rect x="20.48" y="120.3" width="1.04" height="1.4" fill="#da70d6"/><rect x="16.32" y="122.3" width="1.04" height="1.4" fill="#179fff"/><rect x="16.32" y="124.3" width="2.08" height="1.4" fill="#c586c0"/><rect x="19.44" y="124.3" width="1.04" height="1.4" fill="#ffd700"/><rect x="20.48" y="124.3" width="1.04" height="1.4" fill="#d4d4d4"/><rect x="21.52" y="124.3" width="5.20" height="1.4" fill="#dcdcaa"/><rect x="26.72" y="124.3" width="1.04" height="1.4" fill="#ffd700"/><rect x="27.76" y="124.3" width="11.44" height="1.4" fill="#9cdcfe"/><rect x="16.32" y="126.3" width="2.08" height="1.4" fill="#c586c0"/><rect x="19.44" y="126.3" width="1.04" height="1.4" fill="#da70d6"/><rect x="20.48" y="126.3" width="1.04" height="1.4" fill="#d4d4d4"/><rect x="21.52" y="126.3" width="5.20" height="1.4" fill="#dcdcaa"/><rect x="26.72" y="126.3" width="1.04" height="1.4" fill="#da70d6"/><rect x="27.76" y="126.3" width="19.76" height="1.4" fill="#9cdcfe"/><rect x="20.48" y="128.3" width="2.08" height="1.4" fill="#c586c0"/><rect x="23.60" y="128.3" width="1.04" height="1.4" fill="#179fff"/><rect x="24.64" y="128.3" width="1.04" height="1.4" fill="#d4d4d4"/><rect x="25.68" y="128.3" width="5.20" height="1.4" fill="#dcdcaa"/><rect x="30.88" y="128.3" width="1.04" height="1.4" fill="#179fff"/><rect x="31.92" y="128.3" width="19.76" height="1.4" fill="#9cdcfe"/><rect x="51.68" y="128.3" width="1.04" height="1.4" fill="#179fff"/><rect x="53.76" y="128.3" width="1.04" height="1.4" fill="#d4d4d4"/><rect x="24.64" y="130.3" width="19.76" height="1.4" fill="#9cdcfe"/><rect x="44.40" y="130.3" width="2.08" height="1.4" fill="#ffd700"/><rect x="47.52" y="130.3" width="1.04" height="1.4" fill="#d4d4d4"/><rect x="49.60" y="130.3" width="11.44" height="1.4" fill="#dcdcaa"/><rect x="61.04" y="130.3" width="1.04" height="1.4" fill="#ffd700"/><rect x="24.64" y="132.3" width="19.76" height="1.4" fill="#9cdcfe"/><rect x="44.40" y="132.3" width="2.08" height="1.4" fill="#da70d6"/><rect x="47.52" y="132.3" width="1.04" height="1.4" fill="#d4d4d4"/><rect x="49.60" y="132.3" width="11.44" height="1.4" fill="#dcdcaa"/><rect x="61.04" y="132.3" width="1.04" height="1.4" fill="#da70d6"/><rect x="62.08" y="132.3" width="9.36" height="1.4" fill="#ce9178"/><rect x="24.64" y="134.3" width="2.08" height="1.4" fill="#c586c0"/><rect x="27.76" y="134.3" width="1.04" height="1.4" fill="#179fff"/><rect x="28.80" y="134.3" width="1.04" height="1.4" fill="#d4d4d4"/><rect x="29.84" y="134.3" width="5.20" height="1.4" fill="#dcdcaa"/><rect x="35.04" y="134.3" width="1.04" height="1.4" fill="#179fff"/><rect x="36.08" y="134.3" width="11.44" height="1.4" fill="#9cdcfe"/><rect x="28.80" y="136.3" width="16.64" height="1.4" fill="#9cdcfe"/><rect x="24.64" y="138.3" width="1.04" height="1.4" fill="#da70d6"/><rect x="26.72" y="138.3" width="4.16" height="1.4" fill="#c586c0"/><rect x="31.92" y="138.3" width="1.04" height="1.4" fill="#da70d6"/><rect x="28.80" y="140.3" width="6.24" height="1.4" fill="#c586c0"/><rect x="24.64" y="142.3" width="1.04" height="1.4" fill="#ffd700"/><rect x="20.48" y="144.3" width="2.08" height="1.4" fill="#c586c0"/><rect x="23.60" y="144.3" width="1.04" height="1.4" fill="#da70d6"/><rect x="24.64" y="144.3" width="1.04" height="1.4" fill="#d4d4d4"/><rect x="25.68" y="144.3" width="5.20" height="1.4" fill="#dcdcaa"/><rect x="30.88" y="144.3" width="1.04" height="1.4" fill="#da70d6"/><rect x="31.92" y="144.3" width="19.76" height="1.4" fill="#9cdcfe"/><rect x="51.68" y="144.3" width="1.04" height="1.4" fill="#da70d6"/><rect x="53.76" y="144.3" width="2.08" height="1.4" fill="#d4d4d4"/><rect x="24.64" y="146.3" width="6.24" height="1.4" fill="#c586c0"/><rect x="31.92" y="146.3" width="17.68" height="1.4" fill="#9cdcfe"/><rect x="49.60" y="146.3" width="1.04" height="1.4" fill="#d4d4d4"/><rect x="51.68" y="146.3" width="6.24" height="1.4" fill="#c586c0"/><rect x="58.96" y="146.3" width="17.68" height="1.4" fill="#9cdcfe"/><rect x="76.64" y="146.3" width="1.04" height="1.4" fill="#d4d4d4"/><rect x="20.48" y="148.3" width="1.04" height="1.4" fill="#ffd700"/><rect x="16.32" y="150.3" width="6.24" height="1.4" fill="#c586c0"/><rect x="23.60" y="150.3" width="1.04" height="1.4" fill="#9cdcfe"/><rect x="20.48" y="152.3" width="6.24" height="1.4" fill="#c586c0"/><rect x="27.76" y="152.3" width="8.32" height="1.4" fill="#9cdcfe"/><rect x="16.32" y="154.3" width="1.04" height="1.4" fill="#ffd700"/><rect x="12.16" y="156.3" width="1.04" height="1.4" fill="#da70d6"/><rect x="8.00" y="158.3" width="1.04" height="1.4" fill="#179fff"/><rect x="8.00" y="162.3" width="2.08" height="1.4" fill="#c586c0"/><rect x="11.12" y="162.3" width="1.04" height="1.4" fill="#da70d6"/><rect x="12.16" y="162.3" width="1.04" height="1.4" fill="#d4d4d4"/><rect x="13.20" y="162.3" width="15.60" height="1.4" fill="#dcdcaa"/><rect x="28.80" y="162.3" width="1.04" height="1.4" fill="#da70d6"/><rect x="29.84" y="162.3" width="15.60" height="1.4" fill="#ce9178"/><rect x="45.44" y="162.3" width="1.04" height="1.4" fill="#da70d6"/><rect x="12.16" y="164.3" width="8.32" height="1.4" fill="#569cd6"/><rect x="21.52" y="164.3" width="13.52" height="1.4" fill="#dcdcaa"/><rect x="35.04" y="164.3" width="1.04" height="1.4" fill="#179fff"/><rect x="36.08" y="164.3" width="4.16" height="1.4" fill="#9cdcfe"/><rect x="41.28" y="164.3" width="1.04" height="1.4" fill="#d4d4d4"/><rect x="43.36" y="164.3" width="4.16" height="1.4" fill="#569cd6"/><rect x="47.52" y="164.3" width="1.04" height="1.4" fill="#d4d4d4"/><rect x="12.16" y="166.3" width="1.04" height="1.4" fill="#ffd700"/><rect x="16.32" y="168.3" width="19.76" height="1.4" fill="#9cdcfe"/><rect x="36.08" y="168.3" width="2.08" height="1.4" fill="#da70d6"/><rect x="39.20" y="168.3" width="1.04" height="1.4" fill="#d4d4d4"/><rect x="41.28" y="168.3" width="11.44" height="1.4" fill="#dcdcaa"/><rect x="52.72" y="168.3" width="1.04" height="1.4" fill="#da70d6"/><rect x="53.76" y="168.3" width="9.36" height="1.4" fill="#ce9178"/><rect x="16.32" y="170.3" width="2.08" height="1.4" fill="#c586c0"/><rect x="19.44" y="170.3" width="1.04" height="1.4" fill="#179fff"/><rect x="20.48" y="170.3" width="1.04" height="1.4" fill="#d4d4d4"/><rect x="21.52" y="170.3" width="5.20" height="1.4" fill="#dcdcaa"/><rect x="26.72" y="170.3" width="1.04" height="1.4" fill="#179fff"/><rect x="27.76" y="170.3" width="18.72" height="1.4" fill="#9cdcfe"/><rect x="20.48" y="172.3" width="19.76" height="1.4" fill="#9cdcfe"/><rect x="40.24" y="172.3" width="2.08" height="1.4" fill="#ffd700"/><rect x="20.48" y="174.3" width="2.08" height="1.4" fill="#6a9955"/><rect x="23.60" y="174.3" width="6.24" height="1.4" fill="#6a9955"/><rect x="30.88" y="174.3" width="8.32" height="1.4" fill="#6a9955"/><rect x="40.24" y="174.3" width="4.16" height="1.4" fill="#6a9955"/><rect x="20.48" y="178.3" width="6.24" height="1.4" fill="#c586c0"/><rect x="27.76" y="178.3" width="17.68" height="1.4" fill="#9cdcfe"/><rect x="45.44" y="178.3" width="1.04" height="1.4" fill="#d4d4d4"/><rect x="47.52" y="178.3" width="6.24" height="1.4" fill="#c586c0"/><rect x="54.80" y="178.3" width="2.08" height="1.4" fill="#9cdcfe"/><rect x="16.32" y="180.3" width="2.08" height="1.4" fill="#c586c0"/><rect x="19.44" y="180.3" width="1.04" height="1.4" fill="#da70d6"/><rect x="20.48" y="180.3" width="1.04" height="1.4" fill="#d4d4d4"/><rect x="21.52" y="180.3" width="5.20" height="1.4" fill="#dcdcaa"/><rect x="26.72" y="180.3" width="1.04" height="1.4" fill="#da70d6"/><rect x="27.76" y="180.3" width="19.76" height="1.4" fill="#9cdcfe"/><rect x="47.52" y="180.3" width="1.04" height="1.4" fill="#da70d6"/><rect x="49.60" y="180.3" width="2.08" height="1.4" fill="#d4d4d4"/><rect x="52.72" y="180.3" width="8.32" height="1.4" fill="#dcdcaa"/><rect x="61.04" y="180.3" width="1.04" height="1.4" fill="#da70d6"/><rect x="62.08" y="180.3" width="3.12" height="1.4" fill="#9cdcfe"/><rect x="20.48" y="182.3" width="6.24" height="1.4" fill="#c586c0"/><rect x="27.76" y="182.3" width="4.16" height="1.4" fill="#9cdcfe"/><rect x="16.32" y="184.3" width="1.04" height="1.4" fill="#ffd700"/><rect x="18.40" y="184.3" width="1.04" height="1.4" fill="#d4d4d4"/><rect x="20.48" y="186.3" width="6.24" height="1.4" fill="#c586c0"/><rect x="27.76" y="186.3" width="3.12" height="1.4" fill="#9cdcfe"/><rect x="16.32" y="188.3" width="1.04" height="1.4" fill="#179fff"/><rect x="16.32" y="190.3" width="2.08" height="1.4" fill="#6a9955"/><rect x="19.44" y="190.3" width="6.24" height="1.4" fill="#6a9955"/><rect x="26.72" y="190.3" width="8.32" height="1.4" fill="#6a9955"/><rect x="36.08" y="190.3" width="4.16" height="1.4" fill="#6a9955"/><rect x="41.28" y="190.3" width="3.12" height="1.4" fill="#6a9955"/><rect x="45.44" y="190.3" width="6.24" height="1.4" fill="#6a9955"/><rect x="52.72" y="190.3" width="3.12" height="1.4" fill="#6a9955"/><rect x="56.88" y="190.3" width="6.24" height="1.4" fill="#6a9955"/><rect x="64.16" y="190.3" width="8.32" height="1.4" fill="#6a9955"/><rect x="73.52" y="190.3" width="2.08" height="1.4" fill="#6a9955"/><rect x="76.64" y="190.3" width="8.32" height="1.4" fill="#6a9955"/><rect x="86.00" y="190.3" width="4.16" height="1.4" fill="#6a9955"/><rect x="91.20" y="190.3" width="5.20" height="1.4" fill="#6a9955"/><rect x="97.44" y="190.3" width="6.24" height="1.4" fill="#6a9955"/><rect x="104.72" y="190.3" width="8.32" height="1.4" fill="#6a9955"/><rect x="114.08" y="190.3" width="4.16" height="1.4" fill="#6a9955"/><rect x="12.16" y="192.3" width="1.04" height="1.4" fill="#da70d6"/><rect x="8.00" y="194.3" width="1.04" height="1.4" fill="#179fff"/><rect x="8.00" y="200.3" width="2.08" height="1.4" fill="#c586c0"/><rect x="11.12" y="200.3" width="1.04" height="1.4" fill="#179fff"/><rect x="12.16" y="200.3" width="1.04" height="1.4" fill="#d4d4d4"/><rect x="13.20" y="200.3" width="15.60" height="1.4" fill="#dcdcaa"/><rect x="28.80" y="200.3" width="1.04" height="1.4" fill="#179fff"/><rect x="29.84" y="200.3" width="15.60" height="1.4" fill="#ce9178"/><rect x="45.44" y="200.3" width="1.04" height="1.4" fill="#179fff"/><rect x="12.16" y="202.3" width="8.32" height="1.4" fill="#569cd6"/><rect x="21.52" y="202.3" width="12.48" height="1.4" fill="#d4d4d4"/><rect x="12.16" y="204.3" width="1.04" height="1.4" fill="#da70d6"/><rect x="16.32" y="206.3" width="19.76" height="1.4" fill="#9cdcfe"/><rect x="36.08" y="206.3" width="2.08" height="1.4" fill="#179fff"/><rect x="39.20" y="206.3" width="1.04" height="1.4" fill="#d4d4d4"/><rect x="41.28" y="206.3" width="11.44" height="1.4" fill="#dcdcaa"/><rect x="52.72" y="206.3" width="1.04" height="1.4" fill="#179fff"/><rect x="53.76" y="206.3" width="12.48" height="1.4" fill="#ce9178"/><rect x="66.24" y="206.3" width="1.04" height="1.4" fill="#d4d4d4"/><rect x="16.32" y="208.3" width="2.08" height="1.4" fill="#c586c0"/><rect x="19.44" y="208.3" width="1.04" height="1.4" fill="#ffd700"/><rect x="20.48" y="208.3" width="1.04" height="1.4" fill="#d4d4d4"/><rect x="21.52" y="208.3" width="5.20" height="1.4" fill="#dcdcaa"/><rect x="26.72" y="208.3" width="1.04" height="1.4" fill="#ffd700"/><rect x="27.76" y="208.3" width="16.64" height="1.4" fill="#9cdcfe"/><rect x="20.48" y="210.3" width="2.08" height="1.4" fill="#c586c0"/><rect x="23.60" y="210.3" width="1.04" height="1.4" fill="#da70d6"/><rect x="24.64" y="210.3" width="1.04" height="1.4" fill="#d4d4d4"/><rect x="25.68" y="210.3" width="5.20" height="1.4" fill="#dcdcaa"/><rect x="30.88" y="210.3" width="1.04" height="1.4" fill="#da70d6"/><rect x="31.92" y="210.3" width="19.76" height="1.4" fill="#9cdcfe"/><rect x="51.68" y="210.3" width="1.04" height="1.4" fill="#da70d6"/><rect x="53.76" y="210.3" width="1.04" height="1.4" fill="#d4d4d4"/><rect x="24.64" y="212.3" width="2.08" height="1.4" fill="#c586c0"/><rect x="27.76" y="212.3" width="1.04" height="1.4" fill="#179fff"/><rect x="28.80" y="212.3" width="1.04" height="1.4" fill="#d4d4d4"/><rect x="29.84" y="212.3" width="5.20" height="1.4" fill="#dcdcaa"/><rect x="35.04" y="212.3" width="1.04" height="1.4" fill="#179fff"/><rect x="36.08" y="212.3" width="18.72" height="1.4" fill="#9cdcfe"/><rect x="28.80" y="214.3" width="19.76" height="1.4" fill="#9cdcfe"/><rect x="48.56" y="214.3" width="2.08" height="1.4" fill="#ffd700"/><rect x="24.64" y="216.3" width="1.04" height="1.4" fill="#da70d6"/><rect x="20.48" y="218.3" width="1.04" height="1.4" fill="#179fff"/><rect x="20.48" y="222.3" width="6.24" height="1.4" fill="#c586c0"/><rect x="27.76" y="222.3" width="10.40" height="1.4" fill="#9cdcfe"/><rect x="16.32" y="224.3" width="1.04" height="1.4" fill="#179fff"/><rect x="12.16" y="226.3" width="1.04" height="1.4" fill="#ffd700"/><rect x="8.00" y="228.3" width="1.04" height="1.4" fill="#da70d6"/><rect x="8.00" y="232.3" width="2.08" height="1.4" fill="#c586c0"/><rect x="11.12" y="232.3" width="1.04" height="1.4" fill="#ffd700"/><rect x="12.16" y="232.3" width="1.04" height="1.4" fill="#d4d4d4"/><rect x="13.20" y="232.3" width="15.60" height="1.4" fill="#dcdcaa"/><rect x="28.80" y="232.3" width="1.04" height="1.4" fill="#ffd700"/><rect x="29.84" y="232.3" width="15.60" height="1.4" fill="#ce9178"/><rect x="45.44" y="232.3" width="1.04" height="1.4" fill="#ffd700"/><rect x="12.16" y="234.3" width="8.32" height="1.4" fill="#569cd6"/><rect x="21.52" y="234.3" width="13.52" height="1.4" fill="#dcdcaa"/><rect x="35.04" y="234.3" width="1.04" height="1.4" fill="#da70d6"/><rect x="36.08" y="234.3" width="4.16" height="1.4" fill="#9cdcfe"/><rect x="12.16" y="236.3" width="1.04" height="1.4" fill="#179fff"/><rect x="16.32" y="240.3" width="2.08" height="1.4" fill="#c586c0"/><rect x="19.44" y="240.3" width="1.04" height="1.4" fill="#da70d6"/><rect x="20.48" y="240.3" width="1.04" height="1.4" fill="#d4d4d4"/><rect x="21.52" y="240.3" width="5.20" height="1.4" fill="#dcdcaa"/><rect x="26.72" y="240.3" width="1.04" height="1.4" fill="#da70d6"/><rect x="27.76" y="240.3" width="19.76" height="1.4" fill="#9cdcfe"/><rect x="47.52" y="240.3" width="1.04" height="1.4" fill="#da70d6"/><rect x="49.60" y="240.3" width="2.08" height="1.4" fill="#d4d4d4"/><rect x="52.72" y="240.3" width="1.04" height="1.4" fill="#d4d4d4"/><rect x="20.48" y="242.3" width="15.60" height="1.4" fill="#9cdcfe"/><rect x="20.48" y="244.3" width="2.08" height="1.4" fill="#c586c0"/><rect x="23.60" y="244.3" width="1.04" height="1.4" fill="#ffd700"/><rect x="24.64" y="244.3" width="1.04" height="1.4" fill="#d4d4d4"/><rect x="25.68" y="244.3" width="5.20" height="1.4" fill="#dcdcaa"/><rect x="30.88" y="244.3" width="1.04" height="1.4" fill="#ffd700"/><rect x="31.92" y="244.3" width="19.76" height="1.4" fill="#9cdcfe"/><rect x="51.68" y="244.3" width="1.04" height="1.4" fill="#ffd700"/><rect x="53.76" y="244.3" width="2.08" height="1.4" fill="#d4d4d4"/><rect x="56.88" y="244.3" width="6.24" height="1.4" fill="#d4d4d4"/><rect x="24.64" y="246.3" width="2.08" height="1.4" fill="#c586c0"/><rect x="27.76" y="246.3" width="1.04" height="1.4" fill="#da70d6"/><rect x="28.80" y="246.3" width="1.04" height="1.4" fill="#d4d4d4"/><rect x="29.84" y="246.3" width="5.20" height="1.4" fill="#dcdcaa"/><rect x="35.04" y="246.3" width="1.04" height="1.4" fill="#da70d6"/><rect x="36.08" y="246.3" width="12.48" height="1.4" fill="#9cdcfe"/><rect x="28.80" y="248.3" width="19.76" height="1.4" fill="#9cdcfe"/><rect x="48.56" y="248.3" width="2.08" height="1.4" fill="#179fff"/><rect x="51.68" y="248.3" width="1.04" height="1.4" fill="#d4d4d4"/><rect x="53.76" y="248.3" width="11.44" height="1.4" fill="#dcdcaa"/><rect x="65.20" y="248.3" width="1.04" height="1.4" fill="#179fff"/><rect x="66.24" y="248.3" width="1.04" height="1.4" fill="#ce9178"/><rect x="24.64" y="250.3" width="1.04" height="1.4" fill="#ffd700"/><rect x="20.48" y="252.3" width="1.04" height="1.4" fill="#da70d6"/><rect x="20.48" y="254.3" width="19.76" height="1.4" fill="#9cdcfe"/><rect x="20.48" y="258.3" width="6.24" height="1.4" fill="#c586c0"/><rect x="27.76" y="258.3" width="17.68" height="1.4" fill="#9cdcfe"/><rect x="45.44" y="258.3" width="1.04" height="1.4" fill="#d4d4d4"/><rect x="47.52" y="258.3" width="1.04" height="1.4" fill="#d4d4d4"/><rect x="16.32" y="260.3" width="1.04" height="1.4" fill="#179fff"/><rect x="12.16" y="262.3" width="1.04" height="1.4" fill="#ffd700"/><rect x="8.00" y="264.3" width="1.04" height="1.4" fill="#da70d6"/><rect x="8.00" y="270.3" width="2.08" height="1.4" fill="#c586c0"/><rect x="11.12" y="270.3" width="1.04" height="1.4" fill="#da70d6"/><rect x="12.16" y="270.3" width="1.04" height="1.4" fill="#d4d4d4"/><rect x="13.20" y="270.3" width="15.60" height="1.4" fill="#dcdcaa"/><rect x="28.80" y="270.3" width="1.04" height="1.4" fill="#da70d6"/><rect x="29.84" y="270.3" width="15.60" height="1.4" fill="#ce9178"/><rect x="45.44" y="270.3" width="1.04" height="1.4" fill="#da70d6"/><rect x="12.16" y="272.3" width="8.32" height="1.4" fill="#569cd6"/><rect x="21.52" y="272.3" width="12.48" height="1.4" fill="#d4d4d4"/><rect x="12.16" y="274.3" width="1.04" height="1.4" fill="#ffd700"/><rect x="16.32" y="276.3" width="19.76" height="1.4" fill="#9cdcfe"/><rect x="36.08" y="276.3" width="2.08" height="1.4" fill="#da70d6"/><rect x="39.20" y="276.3" width="1.04" height="1.4" fill="#d4d4d4"/><rect x="12.16" y="278.3" width="1.04" height="1.4" fill="#179fff"/><rect x="8.00" y="280.3" width="1.04" height="1.4" fill="#ffd700"/><rect x="8.00" y="282.3" width="2.08" height="1.4" fill="#c586c0"/><rect x="11.12" y="282.3" width="1.04" height="1.4" fill="#da70d6"/><rect x="12.16" y="282.3" width="1.04" height="1.4" fill="#d4d4d4"/><rect x="13.20" y="282.3" width="15.60" height="1.4" fill="#dcdcaa"/><rect x="28.80" y="282.3" width="1.04" height="1.4" fill="#da70d6"/><rect x="29.84" y="282.3" width="9.36" height="1.4" fill="#ce9178"/><rect x="12.16" y="284.3" width="8.32" height="1.4" fill="#569cd6"/><rect x="21.52" y="284.3" width="13.52" height="1.4" fill="#d4d4d4"/><rect x="12.16" y="286.3" width="1.04" height="1.4" fill="#ffd700"/><rect x="16.32" y="288.3" width="19.76" height="1.4" fill="#9cdcfe"/><rect x="36.08" y="288.3" width="2.08" height="1.4" fill="#da70d6"/><rect x="39.20" y="288.3" width="1.04" height="1.4" fill="#d4d4d4"/><rect x="41.28" y="288.3" width="11.44" height="1.4" fill="#dcdcaa"/><rect x="52.72" y="288.3" width="1.04" height="1.4" fill="#da70d6"/><rect x="53.76" y="288.3" width="12.48" height="1.4" fill="#ce9178"/><rect x="16.32" y="290.3" width="2.08" height="1.4" fill="#c586c0"/><rect x="19.44" y="290.3" width="1.04" height="1.4" fill="#179fff"/><rect x="20.48" y="290.3" width="1.04" height="1.4" fill="#d4d4d4"/><rect x="21.52" y="290.3" width="5.20" height="1.4" fill="#dcdcaa"/><rect x="26.72" y="290.3" width="1.04" height="1.4" fill="#179fff"/><rect x="27.76" y="290.3" width="19.76" height="1.4" fill="#9cdcfe"/><rect x="47.52" y="290.3" width="1.04" height="1.4" fill="#179fff"/><rect x="49.60" y="290.3" width="2.08" height="1.4" fill="#d4d4d4"/><rect x="52.72" y="290.3" width="8.32" height="1.4" fill="#dcdcaa"/><rect x="61.04" y="290.3" width="1.04" height="1.4" fill="#179fff"/><rect x="62.08" y="290.3" width="10.40" height="1.4" fill="#9cdcfe"/><rect x="72.48" y="290.3" width="2.08" height="1.4" fill="#179fff"/><rect x="75.60" y="290.3" width="1.04" height="1.4" fill="#179fff"/><rect x="77.68" y="290.3" width="7.28" height="1.4" fill="#9cdcfe"/><rect x="84.96" y="290.3" width="1.04" height="1.4" fill="#179fff"/><rect x="86.00" y="290.3" width="10.40" height="1.4" fill="#9cdcfe"/><rect x="96.40" y="290.3" width="1.04" height="1.4" fill="#179fff"/><rect x="98.48" y="290.3" width="1.04" height="1.4" fill="#d4d4d4"/><rect x="100.56" y="290.3" width="17.68" height="1.4" fill="#9cdcfe"/><rect x="20.48" y="292.3" width="6.24" height="1.4" fill="#c586c0"/><rect x="27.76" y="292.3" width="17.68" height="1.4" fill="#9cdcfe"/><rect x="45.44" y="292.3" width="1.04" height="1.4" fill="#d4d4d4"/><rect x="47.52" y="292.3" width="3.12" height="1.4" fill="#d4d4d4"/><rect x="16.32" y="294.3" width="1.04" height="1.4" fill="#da70d6"/><rect x="18.40" y="294.3" width="4.16" height="1.4" fill="#c586c0"/><rect x="23.60" y="294.3" width="1.04" height="1.4" fill="#da70d6"/><rect x="20.48" y="296.3" width="6.24" height="1.4" fill="#c586c0"/><rect x="27.76" y="296.3" width="3.12" height="1.4" fill="#9cdcfe"/><rect x="16.32" y="298.3" width="1.04" height="1.4" fill="#ffd700"/><rect x="12.16" y="300.3" width="1.04" height="1.4" fill="#da70d6"/><rect x="8.00" y="302.3" width="1.04" height="1.4" fill="#179fff"/></svg></div>
<div class="abs" style="left:1902px;top:120px;width:18px;height:167px;background:#424242"></div>
<div class="abs" style="left:1902px;top:269px;width:18px;height:2px;background:#a0a0a0"></div>
<div class="abs" style="left:1902px;top:287px;width:1px;height:713px;border-left:1px dashed rgba(127,127,127,0.35)"></div>
<div id="status">
<div class="abs" style="left:0;top:0;width:44px;height:28px;background:#16825d"></div>
<svg class="abs" style="left:15px;top:6px" width="14" height="14" viewBox="0 0 14 14"><path d="M1.5 11.5 L5.5 8 L1.5 4.5 M12.5 9.5 L8.5 6 L12.5 2.5" fill="none" stroke="#fff" stroke-width="1.4"/></svg>
<svg class="abs" style="left:53px;top:5px" width="16" height="19" viewBox="0 0 16 19"><circle cx="3.5" cy="3.5" r="2.4" fill="none" stroke="#fff" stroke-width="1.3"/><circle cx="12.5" cy="6.5" r="2.4" fill="none" stroke="#fff" stroke-width="1.3"/><circle cx="3.5" cy="15.5" r="2.4" fill="none" stroke="#fff" stroke-width="1.3"/><path d="M3.5 6 V13 M12.5 9 Q12 12.5 5 13.5" fill="none" stroke="#fff" stroke-width="1.3"/></svg>
<div class="sb" style="left:75px">main*</div>
<svg class="abs" style="left:122px;top:6px" width="20" height="17" viewBox="0 0 20 17"><path d="M3 9 A7 7 0 0 1 16 5.5 M17 8 A7 7 0 0 1 4 11.5" fill="none" stroke="#fff" stroke-width="1.6"/><path d="M13 5.5 H17 V1.5 M7 11.5 H3 V15.5" fill="none" stroke="#fff" stroke-width="1.6"/></svg>
<svg class="abs" style="left:160px;top:6px" width="17" height="17" viewBox="0 0 17 17"><circle cx="8.5" cy="8.5" r="7.3" fill="none" stroke="#fff" stroke-width="1.3"/><path d="M5.5 5.5 L11.5 11.5 M11.5 5.5 L5.5 11.5" stroke="#fff" stroke-width="1.3"/></svg>
<div class="sb" style="left:181px">0</div>
<svg class="abs" style="left:195px;top:5px" width="18" height="17" viewBox="0 0 18 17"><path d="M9 1.5 L16.8 15.5 H1.2Z" fill="none" stroke="#fff" stroke-width="1.4" stroke-linejoin="round"/><path d="M9 6 V11 M9 12.5 V14" stroke="#fff" stroke-width="1.5"/></svg>
<div class="sb" style="left:216.5px">0</div>
<svg class="abs" style="left:248px;top:5px" width="17" height="18" viewBox="0 0 17 18"><path d="M4 2 Q1 5.5 4 9 M13 2 Q16 5.5 13 9 M6 4 Q5 5.5 6 7 M11 4 Q12 5.5 11 7" fill="none" stroke="#fff" stroke-width="1.2"/><circle cx="8.5" cy="5.5" r="1.2" fill="#fff"/><path d="M8.5 6.5 L4.5 17 M8.5 6.5 L12.5 17 M6 13 H11" fill="none" stroke="#fff" stroke-width="1.3"/></svg>
<div class="sb" style="left:268px">0</div>
<svg class="abs" style="left:298px;top:5px" width="19" height="18" viewBox="0 0 19 18"><path d="M1.5 12 Q2.5 5 11 5 V1.5 L17.5 6.5 L11 11 V8 Q5 8 1.5 12Z" fill="none" stroke="#fff" stroke-width="1.4" stroke-linejoin="round"/><circle cx="7.5" cy="14.5" r="2.5" fill="none" stroke="#fff" stroke-width="1.4"/></svg>
<div class="sb" style="left:321px">Live Share</div>
<div class="sb" style="left:1380.5px">Ln 33, Col 112</div>
<div class="sb" style="left:1499.0px">Spaces: 4</div>
<div class="sb" style="left:1583.5px">UTF-8</div>
<div class="sb" style="left:1645.5px">CRLF</div>
<div class="sb" style="left:1700.0px">PHP</div>
<svg class="abs" style="left:1749px;top:5px" width="20" height="18" viewBox="0 0 20 18"><path d="M4 6 Q4 2 7 2 Q10 2 10 5 Q10 2 13 2 Q16 2 16 6 Q18.5 7.5 18.5 10.5 Q18.5 16 10 16 Q1.5 16 1.5 10.5 Q1.5 7.5 4 6Z" fill="none" stroke="#fff" stroke-width="1.6"/><path d="M1 1 L19 17" stroke="#fff" stroke-width="1.8"/><path d="M8 10 V13 M12 10 V13" stroke="#fff" stroke-width="1.4"/></svg>
<svg class="abs" style="left:1788px;top:7px" width="19" height="14" viewBox="0 0 19 14"><path d="M1 7 L5 11 L11.5 3 M7 9.5 L8.5 11 L17.5 1" fill="none" stroke="#fff" stroke-width="1.4"/></svg>
<div class="sb" style="left:1811.5px">phpfmt</div>
<svg class="abs" style="left:1884px;top:5px" width="16" height="18" viewBox="0 0 16 18"><path d="M3 12.5 V7.5 A5 5 0 0 1 13 7.5 V12.5 L14.5 14 H1.5Z" fill="none" stroke="#fff" stroke-width="1.4" stroke-linejoin="round"/><path d="M6 15.5 Q8 17.5 10 15.5" fill="none" stroke="#fff" stroke-width="1.4"/></svg>
</div>
<div id="task">
<svg class="abs" style="left:20.8px;top:15.9px" width="21" height="21" viewBox="0 0 21 21"><path d="M0 1.4 L8.4 0.8 V9.2 H0Z M9.4 0.6 L20.4 0 V9.2 H9.4Z M0 10.2 H8.4 V19.1 L0 18.1Z M9.4 10.2 H20.4 V20.4 L9.4 19.3Z" fill="#ffffff"/></svg>
<div class="abs" style="left:63px;top:0;width:375px;height:52px;background:#f0f0f0;border-bottom:1px solid #c8c8c8"></div>
<svg class="abs" style="left:78px;top:13px" width="26" height="26" viewBox="0 0 26 26"><circle cx="15.5" cy="9.5" r="7.5" fill="none" stroke="#1a1a1a" stroke-width="1.6"/><path d="M10.2 14.8 L1.5 23.5" stroke="#1a1a1a" stroke-width="1.8"/></svg>
<div class="abs" style="left:120.5px;top:15px;font-size:18.3px;color:#222;line-height:22px">Type here to search</div>
<svg class="abs" style="left:335px;top:0px" width="100" height="52" viewBox="0 0 100 52"><path d="M78 6 L69 20 L73 20 L61 34 L66 34 L50 52 L99 52 L90 40 L94 40 L86 28 L90 28Z" fill="#cdc350" stroke="#c83232" stroke-width="1.2" stroke-dasharray="2.2 1.6"/><path d="M62 40 Q78 44 88 28" fill="none" stroke="#c83232" stroke-width="1.2" stroke-dasharray="2 1.4"/><path d="M53 17 Q49 2 55 2 Q61 3 60 18 Q60 30 70 34" fill="none" stroke="#b82020" stroke-width="1.6"/><path d="M40 48 L54 16" stroke="#c4c4c8" stroke-width="2.2"/><path d="M24 27 L44 5 M27 30 L38 4" stroke="#b4b4bc" stroke-width="3"/><ellipse cx="13" cy="28.5" rx="7.5" ry="4.8" transform="rotate(-25 13 28.5)" fill="none" stroke="#3d3a8e" stroke-width="3"/><ellipse cx="27.5" cy="40" rx="4.5" ry="7" transform="rotate(12 27.5 40)" fill="none" stroke="#3d3a8e" stroke-width="3"/></svg>
<svg class="abs" style="left:456px;top:14px" width="26" height="24" viewBox="0 0 26 24"><path d="M1 1.5 H16 M1 22.5 H16 M3 5.5 H14.5 V18.5 H3Z" fill="none" stroke="#fff" stroke-width="1.4"/><path d="M23 0 V24" stroke="#fff" stroke-width="1.4"/><rect x="21.5" y="9" width="3" height="3" fill="#fff"/></svg>
<div class="abs" style="left:510px;top:48.5px;width:52px;height:3.5px;background:#76b9ed"></div>
<div class="abs" style="left:573px;top:48.5px;width:52px;height:3.5px;background:#76b9ed"></div>
<div class="abs" style="left:636px;top:48.5px;width:52px;height:3.5px;background:#76b9ed"></div>
<div class="abs" style="left:699px;top:48.5px;width:52px;height:3.5px;background:#76b9ed"></div>
<div class="abs" style="left:762px;top:48.5px;width:52px;height:3.5px;background:#76b9ed"></div>
<div class="abs" style="left:820px;top:0;width:62px;height:52px;background:rgba(255,255,255,0.13)"></div>
<div class="abs" style="left:820px;top:48.5px;width:62px;height:3.5px;background:#76b9ed"></div>
<svg class="abs" style="left:519px;top:10px" width="33" height="32" viewBox="0 0 33 32"><defs><linearGradient id="eg" x1="0" y1="0" x2="1" y2="1"><stop offset="0" stop-color="#35c1f1"/><stop offset="0.5" stop-color="#1b8ed9"/><stop offset="1" stop-color="#0c59a4"/></linearGradient><linearGradient id="eg2" x1="0" y1="0" x2="1" y2="0"><stop offset="0" stop-color="#1e88d9"/><stop offset="1" stop-color="#5fd068"/></linearGradient></defs><circle cx="16.5" cy="16" r="15.5" fill="url(#eg)"/><path d="M4 14 Q8 4 18 4 Q30 4 31.5 16 Q30 22 24 22 Q19 22 18 17 Q18 12 12 12 Q6 12 4 14Z" fill="url(#eg2)"/><path d="M11 20 Q12 28 22 29 Q14 30 9 25Z" fill="#0a4a90"/></svg>
<svg class="abs" style="left:583px;top:13px" width="30" height="27" viewBox="0 0 30 27"><path d="M0 2 Q0 0 2 0 H10 L12.5 3 H28 Q30 3 30 5 V25 Q30 27 28 27 H2 Q0 27 0 25Z" fill="#f7c940"/><path d="M0 7 H30 V25 Q30 27 28 27 H2 Q0 27 0 25Z" fill="#fbd65a"/><path d="M7 26 V14 H23 V26 M11 26 V19 H19 V26" fill="none" stroke="#3a8fde" stroke-width="3.2"/></svg>
<svg class="abs" style="left:646px;top:10px" width="32" height="32" viewBox="0 0 32 32"><path d="M23 1 L31 5 V27 L23 31 L9 17.5 L4 21.5 L1 20 V12 L4 10.5 L9 14.5Z M23 9.5 L15 16 L23 22.5Z M4 13 V19 L7 16Z" fill="#9a6ad6" fill-rule="evenodd"/><path d="M23 1 L31 5 V27 L23 31Z" fill="#c09ff0" fill-opacity="0.8"/></svg>
<svg class="abs" style="left:709px;top:11px" width="29" height="30" viewBox="0 0 29 30"><path d="M6 3 L26 1 L28 27 L3 29Z" fill="#dfe8ec"/><path d="M7 6 L24 4.5 L25.5 24 L5 26Z" fill="#9fc8d8"/><path d="M8 2 H24" stroke="#777" stroke-width="2.5" stroke-dasharray="1.5 1.5"/><path d="M26 5 L28 26" stroke="#b05040" stroke-width="1.5"/></svg>
<svg class="abs" style="left:771px;top:10px" width="33" height="33" viewBox="0 0 33 33"><circle cx="16.5" cy="16.5" r="15.8" fill="#2da94f"/><path d="M16.5 0.7 A15.8 15.8 0 0 1 30.2 8.6 H16.5 A7.9 7.9 0 0 0 9.7 12.5 L2.8 8.6 A15.8 15.8 0 0 1 16.5 0.7Z" fill="#e33b2e"/><path d="M30.2 8.6 A15.8 15.8 0 0 1 16.5 32.3 L23.4 20.5 A7.9 7.9 0 0 0 23.4 12.5Z" fill="#fdcb2e"/><circle cx="16.5" cy="16.5" r="7.4" fill="#fff"/><circle cx="16.5" cy="16.5" r="5.9" fill="#1a73e8"/></svg>
<svg class="abs" style="left:834px;top:10px" width="33" height="33" viewBox="0 0 100 100"><path d="M74 3 L96 13 V87 L74 97 L30 57 L12 71 L4 67 V33 L12 29 L30 43 Z M74 27 L48 50 L74 73Z" fill="#1f7fc8" fill-rule="evenodd"/><path d="M74 3 L96 13 V87 L74 97Z" fill="#34a2ee"/></svg>
<svg class="abs" style="left:1383px;top:12px" width="31" height="31" viewBox="0 0 31 31"><ellipse cx="15" cy="4" rx="11" ry="3.5" fill="#f5a623"/><ellipse cx="15" cy="9" rx="11" ry="3.5" fill="#e8901a"/><ellipse cx="17" cy="14.5" rx="13" ry="3.8" fill="#f5a623"/><ellipse cx="15" cy="20" rx="11" ry="3.5" fill="#e8901a"/><path d="M9 29 L15 24 L21 29" fill="none" stroke="#5cc04a" stroke-width="2.5"/></svg>
<div class="abs" style="left:1424px;top:16px;font-size:16.9px;color:#fff;line-height:20px">GBP/USD</div>
<div class="abs" style="left:1511px;top:16px;font-size:16.9px;color:#3cb83c;line-height:20px">+0,27%</div>
<svg class="abs" style="left:1597px;top:20px" width="17" height="10" viewBox="0 0 17 10"><path d="M1 9 L8.5 1.5 L16 9" fill="none" stroke="#fff" stroke-width="1.4"/></svg>
<svg class="abs" style="left:1625px;top:18px" width="22" height="14" viewBox="0 0 22 14"><rect x="5" y="3" width="16" height="10" fill="none" stroke="#fff" stroke-width="1.3"/><path d="M1 5 H5 M2 2 V8 M2 8 H5" fill="none" stroke="#fff" stroke-width="1.2"/></svg>
<svg class="abs" style="left:1658px;top:15px" width="18" height="17" viewBox="0 0 18 17"><path d="M1 16 A15 15 0 0 1 16 1 M4 16 A12 12 0 0 1 16 4 M7 16 A9 9 0 0 1 16 7 M10 16 A6 6 0 0 1 16 10" fill="none" stroke="#fff" stroke-width="1.2"/><circle cx="15" cy="15" r="1.6" fill="#fff"/></svg>
<svg class="abs" style="left:1685px;top:15px" width="23" height="20" viewBox="0 0 23 20"><path d="M1.5 6.5 H5 L10 2 V18 L5 13.5 H1.5Z" fill="none" stroke="#fff" stroke-width="1.3" stroke-linejoin="round"/><path d="M13 7 Q14.5 10 13 13 M16 4.5 Q19 10 16 15.5 M19 2 Q23 10 19 18" fill="none" stroke="#fff" stroke-width="1.3"/></svg>
<div class="abs" style="left:1719px;top:16px;font-size:15.8px;color:#fff;line-height:20px">ENG</div>
<div class="abs" style="left:1771.5px;top:5px;font-size:16.3px;color:#fff;line-height:20px">12:39 PM</div>
<div class="abs" style="left:1768px;top:28px;font-size:16.3px;color:#fff;line-height:20px">12/9/2024</div>
<svg class="abs" style="left:1864px;top:14px" width="34" height="32" viewBox="0 0 34 32"><path d="M2 2 H22 V16 H8 L4 20 V16 H2Z" fill="#fff"/><path d="M5.5 6 H18.5 M5.5 9 H18.5 M5.5 12 H14" stroke="#1c2540" stroke-width="1.2"/><circle cx="22.5" cy="21" r="9" fill="#2a2a2a" stroke="#888" stroke-width="1.3"/><text x="22.5" y="26" text-anchor="middle" font-family="Liberation Sans" font-weight="bold" font-size="14" fill="#fff">2</text></svg>
<div class="abs" style="left:1913.5px;top:0;width:1px;height:52px;background:#6a7080"></div>
</div>
<div class="abs" style="left:1897px;top:438px;width:23px;height:124px;background:#1b1b1b;border-radius:3px 0 0 3px"></div>
<svg class="abs" style="left:1897px;top:438px" width="23" height="124" viewBox="0 0 23 124"><circle cx="12" cy="14" r="7" fill="#e8302a" stroke="#f4b0a8" stroke-width="1.2"/><text transform="translate(5.5,27) rotate(90)" font-family="Liberation Sans" font-size="20.5" fill="#ffffff" letter-spacing="-0.1">screenrec</text></svg>
<svg class="abs" style="left:830px;top:940px" width="260" height="125" viewBox="0 0 260 125"><g opacity="0.37"><g fill="none" stroke="#ffffff" stroke-width="11" stroke-linecap="round"><path d="M54 18 V62 Q54 73 43 73 H36 Q22 73 22 58 Q22 47 31 41 M54 67 H215"/><circle cx="91.4" cy="50" r="15.2"/><path d="M133 47 V67 M155 47 V67 M187 42 L185 67"/><circle cx="222.7" cy="57.5" r="16.2"/></g><g fill="#ffffff"><circle cx="83.3" cy="19" r="6.8"/><circle cx="100.2" cy="19" r="6.8"/><circle cx="123.9" cy="33.2" r="6.8"/><circle cx="140.1" cy="33.2" r="6.8"/><text x="14.5" y="109.7" font-family="Liberation Sans" font-weight="bold" font-size="37">mostaql.com</text></g></g></svg></body></html>
